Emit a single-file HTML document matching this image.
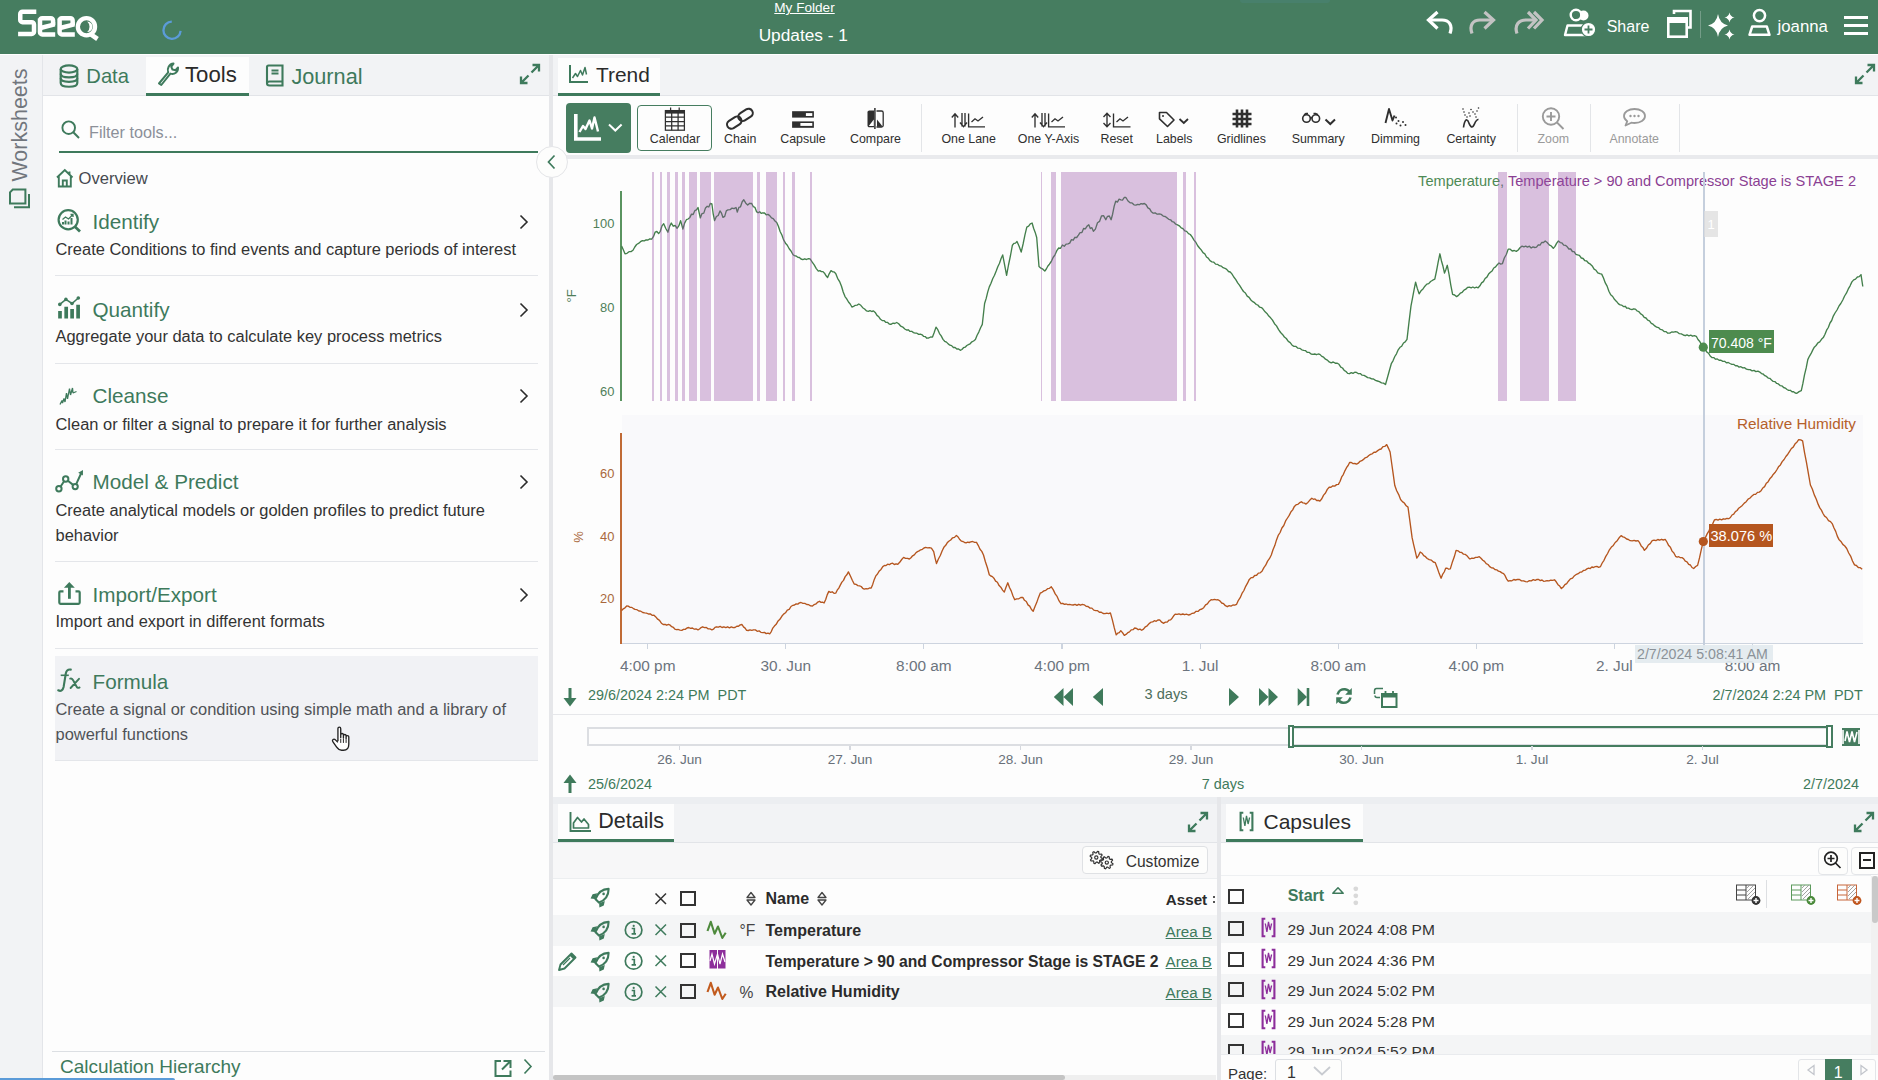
<!DOCTYPE html>
<html><head><meta charset="utf-8"><title>Seeq</title><style>
*{box-sizing:border-box;margin:0;padding:0}
html,body{width:1878px;height:1080px;overflow:hidden;background:#fdfdfc;font-family:"Liberation Sans",sans-serif}
.t{position:absolute;white-space:pre}
.r{position:absolute;display:block}
svg.r{overflow:visible}
</style></head><body>
<div class="r" style="left:0.0px;top:0.0px;width:1878.0px;height:54.0px;background:#467d60;"></div>
<svg class="r" style="left:0.0px;top:0.0px;" width="110" height="54" viewBox="0 0 110 54"><g fill="none" stroke="#fff" stroke-width="4.5"><path d="M36.3,11.65 H22.5 A2.25,2.25 0 0 0 20.25,13.9 V19.9 A2.25,2.25 0 0 0 22.5,22.15 H31.75 A2.25,2.25 0 0 1 34,24.4 V31.65 A2.25,2.25 0 0 1 31.75,33.9 H18.1"/><path d="M40,20.4 A2.2,2.2 0 0 1 42.2,18.2 H50.85 A2.2,2.2 0 0 1 53.05,20.4 V25 M40,18.5 V32.2 A2.2,2.2 0 0 0 42.2,34.4 H55.2"/><path d="M59.6,20.4 A2.2,2.2 0 0 1 61.8,18.2 H70.45 A2.2,2.2 0 0 1 72.65,20.4 V25 M59.6,18.5 V32.2 A2.2,2.2 0 0 0 61.8,34.4 H74.8"/><circle cx="86.45" cy="26.7" r="8.6" stroke-width="4.3"/><path d="M90.5,34.2 L97.5,39" stroke-width="4.6"/></g><path fill="#fff" d="M87.2,21.4 A5.3,5.3 0 0 1 87.2,32 A7.2,7.2 0 0 0 87.2,21.4 Z"/><path fill="#fff" d="M41,25.4 L55.2,22 L55.2,26.6 L41,30.2 Z M60.6,25.4 L74.8,22 L74.8,26.6 L60.6,30.2 Z"/></svg>
<svg class="r" style="left:160.0px;top:18.0px;" width="24" height="24" viewBox="0 0 24 24"><path d="M11.8,3.6 A8.6,8.6 0 1 0 20.6,12.8" fill="none" stroke="#5b9bd8" stroke-width="2.3"/></svg>
<div class="t" style="top:1.1px;font-size:13.60px;line-height:13.60px;color:#fff;left:804.5px;transform:translateX(-50%);text-decoration:underline;">My Folder</div>
<div class="t" style="top:27.2px;font-size:17.30px;line-height:17.30px;color:#fff;left:803.3px;transform:translateX(-50%);">Updates - 1</div>
<svg class="r" style="left:1420.0px;top:6.0px;" width="40" height="34" viewBox="0 0 40 34"><path d="M17.5,6 L8.5,14 L17.5,22.5" fill="none" stroke="#fff" stroke-width="3.2" stroke-linejoin="miter"/><path d="M9.5,14 H22 C29,14 33,19 30,27.5" fill="none" stroke="#fff" stroke-width="3.2"/></svg>
<svg class="r" style="left:1462.0px;top:6.0px;" width="40" height="34" viewBox="0 0 40 34"><g transform="translate(40,0) scale(-1,1)"><path d="M17.5,6 L8.5,14 L17.5,22.5" fill="none" stroke="#c3c3c3" stroke-width="3.2"/><path d="M9.5,14 H22 C29,14 33,19 30,27.5" fill="none" stroke="#c3c3c3" stroke-width="3.2"/></g></svg>
<svg class="r" style="left:1508.0px;top:6.0px;" width="40" height="34" viewBox="0 0 40 34"><g fill="none" stroke="#c3c3c3" stroke-width="3.2"><path d="M20,6 L28,14 L20,22.5"/><path d="M26,6 L34,14 L26,22.5"/><path d="M27,14 H18 C11,14 6,19 9,27.5"/></g></svg>
<svg class="r" style="left:1560.0px;top:6.0px;" width="40" height="34" viewBox="0 0 40 34"><circle cx="23.5" cy="9.5" r="5" fill="#fff"/><circle cx="16" cy="9" r="5.3" fill="#467d60" stroke="#fff" stroke-width="2.4"/><path d="M5,29 L7.5,19.5 H24 L26,29 Z" fill="none" stroke="#fff" stroke-width="2.4" stroke-linejoin="round"/><circle cx="28.5" cy="23.5" r="7.2" fill="#fff" stroke="#467d60" stroke-width="1.2"/><path d="M28.5,19.5 V27.5 M24.5,23.5 H32.5" stroke="#467d60" stroke-width="1.8"/></svg>
<div class="t" style="top:19.1px;font-size:16.00px;line-height:16.00px;color:#fff;left:1606.7px;">Share</div>
<svg class="r" style="left:1662.0px;top:6.0px;" width="40" height="34" viewBox="0 0 40 34"><path d="M12,8 V5 H28.5 V21.5 H25.5" fill="none" stroke="#fff" stroke-width="2.6"/><rect x="6.3" y="12.3" width="18.4" height="18.4" fill="none" stroke="#fff" stroke-width="2.6"/><rect x="5" y="11" width="21" height="6" fill="#fff"/></svg>
<div class="r" style="left:1700.0px;top:11.0px;width:1.0px;height:27.0px;background:rgba(255,255,255,0.25);"></div>
<svg class="r" style="left:1704.0px;top:8.0px;" width="36" height="36" viewBox="0 0 36 36"><path d="M14,6 Q15.5,15.5 24,17.5 Q15.5,19.5 14,29 Q12.5,19.5 4,17.5 Q12.5,15.5 14,6 Z" fill="#fff"/><path d="M25.5,4.5 Q26.3,8.7 30.5,9.5 Q26.3,10.3 25.5,14.5 Q24.7,10.3 20.5,9.5 Q24.7,8.7 25.5,4.5 Z" fill="#fff"/><path d="M25.5,21.5 Q26.3,25.7 30.5,26.5 Q26.3,27.3 25.5,31.5 Q24.7,27.3 20.5,26.5 Q24.7,25.7 25.5,21.5 Z" fill="#fff"/></svg>
<svg class="r" style="left:1744.0px;top:6.0px;" width="32" height="34" viewBox="0 0 32 34"><circle cx="15.5" cy="9.6" r="5.6" fill="none" stroke="#fff" stroke-width="2.5"/><path d="M5.5,28.8 L8.2,20.5 H22.8 L25.5,28.8 Z" fill="none" stroke="#fff" stroke-width="2.5" stroke-linejoin="round"/></svg>
<div class="t" style="top:18.6px;font-size:16.80px;line-height:16.80px;color:#fff;left:1777.5px;">joanna</div>
<div class="r" style="left:1844.2px;top:16.2px;width:23.8px;height:2.7px;background:#fff;"></div>
<div class="r" style="left:1844.2px;top:24.1px;width:23.8px;height:2.7px;background:#fff;"></div>
<div class="r" style="left:1844.2px;top:32.0px;width:23.8px;height:2.7px;background:#fff;"></div>
<div class="r" style="left:1240.0px;top:0.0px;width:90.0px;height:3.0px;background:rgba(80,140,150,0.22);border-radius:0 0 40px 40px;"></div>
<div class="r" style="left:0.0px;top:54.0px;width:43.0px;height:1026.0px;background:#f2f3f5;"></div>
<div class="r" style="left:42.0px;top:54.0px;width:1.0px;height:1026.0px;background:#e3e5e9;"></div>
<div class="r" style="left:0.0px;top:54.0px;width:1878.0px;height:1.0px;background:#ffffff;"></div>
<div class="t" style="left:21.3px;top:125px;font-size:21.5px;line-height:21.5px;color:#71767d;transform:translate(-50%,-50%) rotate(-90deg);">Worksheets</div>
<svg class="r" style="left:5.0px;top:185.0px;" width="30" height="28" viewBox="0 0 30 28"><g fill="none" stroke="#3e7a5c" stroke-width="2"><path d="M7.8,4.6 H20.4 V18.6 H5 V7.4 Z"/><path d="M24,9 V22.3 H9"/></g></svg>
<div class="r" style="left:43.0px;top:55.0px;width:506.0px;height:1025.0px;background:#fdfdfd;"></div>
<div class="r" style="left:43.0px;top:55.0px;width:506.0px;height:41.0px;background:#f2f3f5;"></div>
<div class="r" style="left:43.0px;top:95.0px;width:506.0px;height:1.0px;background:#e2e4e8;"></div>
<div class="r" style="left:146.0px;top:57.0px;width:103.0px;height:38.0px;background:#fdfdfd;"></div>
<div class="r" style="left:146.0px;top:92.5px;width:103.0px;height:3.0px;background:#3e7a5c;"></div>
<svg class="r" style="left:56.0px;top:62.0px;" width="26" height="28" viewBox="0 0 26 28"><g fill="none" stroke="#3e7a5c" stroke-width="2.2"><ellipse cx="13" cy="7" rx="8.3" ry="3.6"/><path d="M4.7,7 V21 C4.7,26 21.3,26 21.3,21 V7"/><path d="M4.7,11.7 C4.7,16.5 21.3,16.5 21.3,11.7 M4.7,16.3 C4.7,21 21.3,21 21.3,16.3"/></g></svg>
<div class="t" style="top:66.4px;font-size:20.20px;line-height:20.20px;color:#3e7a5c;left:86.3px;">Data</div>
<svg class="r" style="left:154.0px;top:60.0px;" width="28" height="28" viewBox="0 0 28 28"><path d="M5,23.5 L14.2,12.3 C12.8,8.5 15,4 19.5,3.6 L17.3,6.8 L18.5,9.6 L21.5,10.2 L24,7.5 C24.3,12 20.6,14.8 16.4,13.6 L7.3,25 Z" fill="none" stroke="#3e7a5c" stroke-width="2" stroke-linejoin="round"/></svg>
<div class="t" style="top:64.2px;font-size:22.20px;line-height:22.20px;color:#2b2b2b;left:185.0px;">Tools</div>
<svg class="r" style="left:262.0px;top:62.0px;" width="26" height="28" viewBox="0 0 26 28"><g fill="none" stroke="#3e7a5c" stroke-width="2.1"><path d="M5,21.5 V5 C5,4 5.5,3.5 6.5,3.5 H20.5 V19.5 H7.5 C5.5,19.5 5,20.5 5,21.5 C5,23 5.8,23.5 7.5,23.5 H20.5 V19.5"/><path d="M9.5,8.5 H16.5 M9.5,11.5 H16.5"/></g></svg>
<div class="t" style="top:65.6px;font-size:21.70px;line-height:21.70px;color:#3e7a5c;left:291.4px;">Journal</div>
<svg class="r" style="left:518.0px;top:62.0px;" width="24" height="24" viewBox="0 0 24 24"><g fill="none" stroke="#3e7a5c" stroke-width="2.3"><path d="M13.5,10.5 L21,3 M14.5,3 H21 V9.5"/><path d="M10.5,13.5 L3,21 M3,14.5 V21 H9.5"/></g></svg>
<svg class="r" style="left:60.0px;top:119.0px;" width="22" height="22" viewBox="0 0 22 22"><circle cx="8.7" cy="8.7" r="6.3" fill="none" stroke="#3e7a5c" stroke-width="1.9"/><path d="M13.3,13.3 L19,19" stroke="#3e7a5c" stroke-width="2"/></svg>
<div class="t" style="top:124.1px;font-size:16.20px;line-height:16.20px;color:#8c9099;left:89.0px;">Filter tools...</div>
<div class="r" style="left:59.0px;top:151.3px;width:479.0px;height:2.0px;background:#3e7a5c;"></div>
<svg class="r" style="left:54.0px;top:167.0px;" width="22" height="22" viewBox="0 0 22 22"><path d="M3,10.5 L10.8,3 L18.5,10.5 M4.8,9 V19.5 H16.8 V9 M8.8,19.5 V13.5 H12.8 V19.5 M15.5,4.5 V7.5" fill="none" stroke="#3e7a5c" stroke-width="1.9"/></svg>
<div class="t" style="top:171.4px;font-size:16.60px;line-height:16.60px;color:#464a50;left:78.5px;">Overview</div>
<div class="r" style="left:55.0px;top:656.0px;width:483.0px;height:104.0px;background:#f1f2f5;"></div>
<div class="r" style="left:55.0px;top:275.1px;width:483.0px;height:1.2px;background:#e4e6ea;"></div>
<div class="r" style="left:55.0px;top:363.0px;width:483.0px;height:1.2px;background:#e4e6ea;"></div>
<div class="r" style="left:55.0px;top:448.9px;width:483.0px;height:1.2px;background:#e4e6ea;"></div>
<div class="r" style="left:55.0px;top:561.0px;width:483.0px;height:1.2px;background:#e4e6ea;"></div>
<div class="r" style="left:55.0px;top:647.8px;width:483.0px;height:1.2px;background:#e4e6ea;"></div>
<div class="r" style="left:55.0px;top:759.7px;width:483.0px;height:1.2px;background:#e4e6ea;"></div>
<div class="t" style="top:211.9px;font-size:20.70px;line-height:20.70px;color:#3e7a5c;left:92.5px;">Identify</div>
<div class="t" style="top:241.3px;font-size:16.45px;line-height:16.45px;color:#333;left:55.5px;">Create Conditions to find events and capture periods of interest</div>
<svg class="r" style="left:518.0px;top:213.7px;" width="12" height="16" viewBox="0 0 12 16"><path d="M2.5,1.5 L9,8 L2.5,14.5" fill="none" stroke="#2b2b2b" stroke-width="1.6"/></svg>
<div class="t" style="top:300.1px;font-size:20.70px;line-height:20.70px;color:#3e7a5c;left:92.5px;">Quantify</div>
<div class="t" style="top:328.1px;font-size:16.45px;line-height:16.45px;color:#333;left:55.5px;">Aggregate your data to calculate key process metrics</div>
<svg class="r" style="left:518.0px;top:301.9px;" width="12" height="16" viewBox="0 0 12 16"><path d="M2.5,1.5 L9,8 L2.5,14.5" fill="none" stroke="#2b2b2b" stroke-width="1.6"/></svg>
<div class="t" style="top:386.1px;font-size:20.70px;line-height:20.70px;color:#3e7a5c;left:92.5px;">Cleanse</div>
<div class="t" style="top:415.5px;font-size:16.45px;line-height:16.45px;color:#333;left:55.5px;">Clean or filter a signal to prepare it for further analysis</div>
<svg class="r" style="left:518.0px;top:387.9px;" width="12" height="16" viewBox="0 0 12 16"><path d="M2.5,1.5 L9,8 L2.5,14.5" fill="none" stroke="#2b2b2b" stroke-width="1.6"/></svg>
<div class="t" style="top:472.4px;font-size:20.70px;line-height:20.70px;color:#3e7a5c;left:92.5px;">Model &amp; Predict</div>
<div class="t" style="top:501.8px;font-size:16.45px;line-height:16.45px;color:#333;left:55.5px;">Create analytical models or golden profiles to predict future</div>
<div class="t" style="top:526.6px;font-size:16.45px;line-height:16.45px;color:#333;left:55.5px;">behavior</div>
<svg class="r" style="left:518.0px;top:474.2px;" width="12" height="16" viewBox="0 0 12 16"><path d="M2.5,1.5 L9,8 L2.5,14.5" fill="none" stroke="#2b2b2b" stroke-width="1.6"/></svg>
<div class="t" style="top:585.4px;font-size:20.70px;line-height:20.70px;color:#3e7a5c;left:92.5px;">Import/Export</div>
<div class="t" style="top:613.4px;font-size:16.45px;line-height:16.45px;color:#333;left:55.5px;">Import and export in different formats</div>
<svg class="r" style="left:518.0px;top:587.2px;" width="12" height="16" viewBox="0 0 12 16"><path d="M2.5,1.5 L9,8 L2.5,14.5" fill="none" stroke="#2b2b2b" stroke-width="1.6"/></svg>
<div class="t" style="top:671.9px;font-size:20.70px;line-height:20.70px;color:#3e7a5c;left:92.5px;">Formula</div>
<div class="t" style="top:701.3px;font-size:16.45px;line-height:16.45px;color:#505257;left:55.5px;">Create a signal or condition using simple math and a library of</div>
<div class="t" style="top:726.1px;font-size:16.45px;line-height:16.45px;color:#505257;left:55.5px;">powerful functions</div>
<svg class="r" style="left:55.0px;top:207.0px;" width="28" height="28" viewBox="0 0 28 28"><g fill="none" stroke="#3e7a5c" stroke-width="2.2"><circle cx="13.2" cy="12.8" r="9.6"/><path d="M20,19.8 L25,24.5" stroke-width="2.8"/></g><path d="M8,17.5 V15 M10.5,17.5 V13.5 M13.5,17.5 V14.5 M16.5,17.5 V11" stroke="#3e7a5c" stroke-width="2"/><path d="M7.5,12.5 L10.5,10 L13.5,12 L18,7.5 M15.5,7.5 H18 V10" fill="none" stroke="#3e7a5c" stroke-width="1.3"/></svg>
<svg class="r" style="left:55.0px;top:294.0px;" width="28" height="28" viewBox="0 0 28 28"><path d="M5,24.5 V17 M11.2,24.5 V12.8 M17.1,24.5 V15 M23.1,24.5 V10.8" stroke="#3e7a5c" stroke-width="3.7"/><path d="M4.8,10.4 L10.9,5.4 L17,9.5 L23.3,4" fill="none" stroke="#3e7a5c" stroke-width="1.6"/><g fill="#3e7a5c"><circle cx="4.8" cy="10.4" r="1.8"/><circle cx="10.9" cy="5.4" r="1.8"/><circle cx="17" cy="9.5" r="1.8"/><circle cx="23.3" cy="4" r="1.8"/></g></svg>
<svg class="r" style="left:55.0px;top:380.0px;" width="28" height="28" viewBox="0 0 28 28"><path d="M5,24.5 L7,20.5 L7.5,23 L9,18.5 L10,22 L11.5,13 L12.5,19 L14.5,8.5 L15.5,15 L17.5,8 L18,13 L21.5,11.5" fill="none" stroke="#3e7a5c" stroke-width="1.3" stroke-linejoin="bevel"/></svg>
<svg class="r" style="left:54.0px;top:466.0px;" width="32" height="28" viewBox="0 0 32 28"><g fill="none" stroke="#3e7a5c" stroke-width="2"><circle cx="4.9" cy="22.7" r="2.7"/><circle cx="11.7" cy="13" r="2.7"/><circle cx="21.2" cy="20.6" r="2.6"/><path d="M6.6,20.5 L10.1,15.2 M13.9,14.8 L19.1,18.9 M22.2,18.2 L27.3,7"/></g><path d="M24.2,6.8 L29,4 L28.9,9.4 Z" fill="#3e7a5c"/></svg>
<svg class="r" style="left:55.0px;top:579.0px;" width="28" height="28" viewBox="0 0 28 28"><path d="M8.5,12.3 H5.4 C4.5,12.3 4.3,12.8 4.3,13.6 V23.6 C4.3,24.5 4.7,24.8 5.5,24.8 H23.5 C24.4,24.8 24.7,24.4 24.7,23.5 V13.6 C24.7,12.8 24.4,12.3 23.5,12.3 H20.5" fill="none" stroke="#3e7a5c" stroke-width="2.2"/><path d="M14.4,19.8 V8" stroke="#3e7a5c" stroke-width="2.8"/><path d="M8.9,8.8 L14.3,3 L19.8,8.8 Z" fill="#3e7a5c"/></svg>
<svg class="r" style="left:55.0px;top:665.0px;" width="28" height="30" viewBox="0 0 28 30"><path d="M3.2,25.3 C5.5,26.5 7.8,25.8 8.6,22 L10.8,8.5 C11.4,5.3 13,4.2 15.8,4.6" fill="none" stroke="#3e7a5c" stroke-width="2.1" stroke-linecap="round"/><path d="M5.7,10.3 H13.8" stroke="#3e7a5c" stroke-width="1.6"/><path d="M15.2,13.6 C16.5,13 17.5,13.8 18.3,15.5 L21.5,21.5 C22.3,23 23.2,23.3 24.6,22.4 M24,13.8 L15.6,23" fill="none" stroke="#3e7a5c" stroke-width="1.9" stroke-linecap="round"/></svg>
<svg class="r" style="left:330.0px;top:724.0px;" width="25" height="30" viewBox="0 0 25 30"><g transform="scale(1.22)"><path d="M6.5,14 V3.8 C6.5,2.2 8.8,2.2 8.8,3.8 V11 V8.8 C8.8,7.4 11,7.4 11,8.8 V11.5 V9.6 C11,8.3 13.2,8.3 13.2,9.6 V12 V10.5 C13.2,9.2 15.4,9.2 15.4,10.5 V16.5 C15.4,19.5 13.8,21.5 11,21.5 H9.5 C7.5,21.5 6.5,20.5 5.3,18.8 L2.3,14.5 C1.4,13.2 3,11.8 4.2,12.8 L6.5,15" fill="#fff" stroke="#222" stroke-width="1.1" stroke-linejoin="round"/><path d="M8.8,12 V15.5 M11,12 V15.5 M13.2,12.5 V15.5" stroke="#222" stroke-width="0.8"/></g></svg>
<div class="r" style="left:52.0px;top:1051.0px;width:493.0px;height:1.2px;background:#dcdfe3;"></div>
<div class="t" style="top:1056.9px;font-size:19.00px;line-height:19.00px;color:#3e7a5c;left:60.0px;">Calculation Hierarchy</div>
<svg class="r" style="left:491.0px;top:1057.0px;" width="24" height="22" viewBox="0 0 24 22"><path d="M10,4 H4.5 V19 H19.5 V13.5 M12.5,4 H19.5 V11 M19.5,4 L11,12.5" fill="none" stroke="#3e7a5c" stroke-width="2"/></svg>
<svg class="r" style="left:522.0px;top:1058.0px;" width="12" height="17" viewBox="0 0 12 17"><path d="M2.5,1.5 L9,8.5 L2.5,15.5" fill="none" stroke="#3e7a5c" stroke-width="1.6"/></svg>
<div class="r" style="left:0.0px;top:1077.5px;width:175.0px;height:2.5px;background:#5b9bd8;border-radius:0 2px 0 0;"></div>
<div class="r" style="left:549.0px;top:55.0px;width:4.0px;height:1025.0px;background:#e6e7ea;"></div>
<div class="r" style="left:553.0px;top:55.0px;width:1325.0px;height:1025.0px;background:#fdfdfd;"></div>
<div class="r" style="left:553.0px;top:55.0px;width:1325.0px;height:41.0px;background:#f2f3f5;"></div>
<div class="r" style="left:553.0px;top:95.0px;width:1325.0px;height:1.0px;background:#e2e4e8;"></div>
<div class="r" style="left:558.0px;top:58.0px;width:102.0px;height:37.0px;background:#fdfdfd;"></div>
<div class="r" style="left:558.0px;top:92.8px;width:102.0px;height:2.8px;background:#3e7a5c;"></div>
<svg class="r" style="left:567.0px;top:62.0px;" width="24" height="24" viewBox="0 0 24 24"><path d="M3,3 V20 H21" fill="none" stroke="#3e7a5c" stroke-width="2"/><path d="M5.5,16 L8.5,11.5 L10.5,14.5 L13.5,8.5 L15.5,13 L18,5.5 L19.5,12.5" fill="none" stroke="#3e7a5c" stroke-width="1.5" stroke-linejoin="round"/></svg>
<div class="t" style="top:65.3px;font-size:20.90px;line-height:20.90px;color:#2b2b2b;left:596.0px;">Trend</div>
<svg class="r" style="left:1853.0px;top:62.0px;" width="24" height="24" viewBox="0 0 24 24"><g fill="none" stroke="#3e7a5c" stroke-width="2.3"><path d="M13.5,10.5 L21,3 M14.5,3 H21 V9.5"/><path d="M10.5,13.5 L3,21 M3,14.5 V21 H9.5"/></g></svg>
<div class="r" style="left:553.0px;top:155.0px;width:1325.0px;height:3.5px;background:#e9eaed;"></div>
<div class="r" style="left:566.2px;top:102.8px;width:64.6px;height:50.0px;background:#467d60;border-radius:4px;"></div>
<svg class="r" style="left:566.0px;top:103.0px;" width="65" height="50" viewBox="0 0 65 50"><path d="M9.8,11 V36 H35" fill="none" stroke="#fff" stroke-width="3.6"/><path d="M13.5,29 L17,23 L19.5,26 L23.5,17.5 L26,25.5 L28.5,14.5 L32,28.5" fill="none" stroke="#fff" stroke-width="2.4" stroke-linejoin="round"/><path d="M43,21.5 L49.3,27.5 L55.6,21.5" fill="none" stroke="#fff" stroke-width="2"/></svg>
<div class="r" style="left:637.2px;top:104.6px;width:74.6px;height:46.6px;background:transparent;border:1.3px solid #467d60;border-radius:4px;"></div>
<svg class="r" style="left:662.0px;top:106.0px;" width="26" height="28" viewBox="0 0 26 28"><g fill="none" stroke="#2f2f2f" stroke-width="1.25"><rect x="3.4" y="4.6" width="19" height="19.6"/><path d="M3.4,11 H22.4 M3.4,15.5 H22.4 M3.4,19.8 H22.4 M9.7,7 V24.2 M16.1,7 V24.2 M8.6,1.6 V5 M17.2,1.6 V5"/></g><rect x="3.4" y="4.6" width="19" height="3" fill="#2f2f2f"/></svg>
<div class="t" style="top:133.0px;font-size:12.40px;line-height:12.40px;color:#2f2f2f;left:675.0px;transform:translateX(-50%);">Calendar</div>
<svg class="r" style="left:725.0px;top:106.0px;" width="30" height="26" viewBox="0 0 30 26"><g fill="none" stroke="#2f2f2f" stroke-width="2.1"><rect x="1.5" y="12.3" width="15.5" height="8.6" rx="4.3" transform="rotate(-32 9.25 16.6)"/><rect x="12.8" y="4.6" width="15.5" height="8.6" rx="4.3" transform="rotate(-32 20.55 8.9)"/></g></svg>
<div class="t" style="top:133.0px;font-size:12.40px;line-height:12.40px;color:#2f2f2f;left:740.2px;transform:translateX(-50%);">Chain</div>
<svg class="r" style="left:790.0px;top:109.0px;" width="26" height="22" viewBox="0 0 26 22"><rect x="2.1" y="2.2" width="21.8" height="6.4" fill="#2f2f2f"/><rect x="15.9" y="4.1" width="6.4" height="2.9" fill="#fff"/><rect x="2.1" y="12.4" width="21.8" height="6.4" fill="#2f2f2f"/><rect x="10.4" y="14" width="11.9" height="2.9" fill="#fff"/></svg>
<div class="t" style="top:133.0px;font-size:12.40px;line-height:12.40px;color:#2f2f2f;left:803.0px;transform:translateX(-50%);">Capsule</div>
<svg class="r" style="left:865.0px;top:106.0px;" width="22" height="26" viewBox="0 0 22 26"><path d="M9,4.5 H4.3 C3.3,4.5 2.5,5.3 2.5,6.3 V19.5 C2.5,20.5 3.3,21.3 4.3,21.3 H9 Z" fill="#2f2f2f"/><path d="M8.8,13.5 V20 H3.8 Z" fill="#fff"/><path d="M9.9,2 V23" stroke="#2f2f2f" stroke-width="1.5"/><path d="M11.5,5 H16.5 C17.5,5 18.2,5.7 18.2,6.7 V19.5 C18.2,20.5 17.5,21 16.5,21 H11.5" fill="none" stroke="#2f2f2f" stroke-width="1.3"/><path d="M12,13.5 L17.8,20.8 H12 Z" fill="#2f2f2f"/></svg>
<div class="t" style="top:133.0px;font-size:12.40px;line-height:12.40px;color:#2f2f2f;left:875.5px;transform:translateX(-50%);">Compare</div>
<div class="r" style="left:921.0px;top:104.0px;width:1.0px;height:48.0px;background:#e3e5e8;"></div>
<svg class="r" style="left:950.0px;top:110.0px;" width="38" height="20" viewBox="0 0 38 20"><g fill="none" stroke="#2f2f2f" stroke-width="1.35"><path d="M5,17.5 V4 M1.8,7.5 L5,3.8 L8.2,7.5"/><path d="M12,3 V16.5 M15,3 V16.5 M10,12.5 L13.5,16.8 L17,12.5"/><path d="M18.6,3.5 V16.8 H35"/><path d="M21.5,12 L25,8.8 L28,11 L33,7"/></g></svg>
<div class="t" style="top:133.0px;font-size:12.40px;line-height:12.40px;color:#2f2f2f;left:968.7px;transform:translateX(-50%);">One Lane</div>
<svg class="r" style="left:1029.5px;top:110.0px;" width="38" height="20" viewBox="0 0 38 20"><g fill="none" stroke="#2f2f2f" stroke-width="1.35"><path d="M5,17.5 V4 M1.8,7.5 L5,3.8 L8.2,7.5"/><path d="M12,3 V16.5 M15,3 V16.5 M10,12.5 L13.5,16.8 L17,12.5"/><path d="M18.6,3.5 V16.8 H35"/><path d="M21.5,12 L25,8.8 L28,11 L33,7"/></g></svg>
<div class="t" style="top:133.0px;font-size:12.40px;line-height:12.40px;color:#2f2f2f;left:1048.5px;transform:translateX(-50%);">One Y-Axis</div>
<svg class="r" style="left:1101.0px;top:110.0px;" width="32" height="20" viewBox="0 0 32 20"><g fill="none" stroke="#2f2f2f" stroke-width="1.35"><path d="M6,3.5 V16.5 M2.5,7 L6,3.2 L9.5,7 M2.5,13 L6,16.8 L9.5,13"/><path d="M12.5,3.5 V16.8 H29.5"/><path d="M15.5,12 L19,8.8 L22,11 L27,7"/></g></svg>
<div class="t" style="top:133.0px;font-size:12.40px;line-height:12.40px;color:#2f2f2f;left:1116.7px;transform:translateX(-50%);">Reset</div>
<svg class="r" style="left:1157.0px;top:110.0px;" width="34" height="20" viewBox="0 0 34 20"><path d="M2.5,2.5 H9.5 L17,10 L10.5,16.5 L2.5,8.8 Z" fill="none" stroke="#2f2f2f" stroke-width="1.6" stroke-linejoin="round"/><circle cx="6" cy="6" r="1" fill="#2f2f2f"/><path d="M22.5,9 L26.8,13 L31,9" fill="none" stroke="#2f2f2f" stroke-width="1.8"/></svg>
<div class="t" style="top:133.0px;font-size:12.40px;line-height:12.40px;color:#2f2f2f;left:1174.3px;transform:translateX(-50%);">Labels</div>
<svg class="r" style="left:1230.0px;top:108.0px;" width="24" height="22" viewBox="0 0 24 22"><path d="M7,1.5 V19.5 M12,1.5 V19.5 M17,1.5 V19.5 M2.5,6 H21.5 M2.5,11 H21.5 M2.5,16 H21.5" stroke="#2f2f2f" stroke-width="2.6"/></svg>
<div class="t" style="top:133.0px;font-size:12.40px;line-height:12.40px;color:#2f2f2f;left:1241.4px;transform:translateX(-50%);">Gridlines</div>
<svg class="r" style="left:1299.0px;top:110.0px;" width="40" height="18" viewBox="0 0 40 18"><g fill="none" stroke="#2f2f2f" stroke-width="1.6"><circle cx="7.5" cy="8.5" r="3.8"/><circle cx="16.8" cy="8.5" r="3.8"/><path d="M11.3,8.3 C11.8,7.3 12.5,7.3 13,8.3 M5,4.8 L7,3.5 H9 M14.5,3.5 H16.5 L19,4.8"/></g><path d="M26.5,9.5 L31.3,14 L36,9.5" fill="none" stroke="#2f2f2f" stroke-width="2"/></svg>
<div class="t" style="top:133.0px;font-size:12.40px;line-height:12.40px;color:#2f2f2f;left:1318.2px;transform:translateX(-50%);">Summary</div>
<svg class="r" style="left:1383.0px;top:106.0px;" width="26" height="24" viewBox="0 0 26 24"><path d="M2.5,17 L6,3 L9.5,14.5 L11.5,9.5" fill="none" stroke="#2f2f2f" stroke-width="1.9" stroke-linejoin="round"/><g fill="#2f2f2f"><circle cx="13" cy="11.5" r="1"/><circle cx="15.5" cy="15" r="1"/><circle cx="17.5" cy="19.5" r="1"/><circle cx="20" cy="16" r="1"/><circle cx="22.5" cy="19" r="1"/><circle cx="13.5" cy="17.5" r="1"/></g></svg>
<div class="t" style="top:133.0px;font-size:12.40px;line-height:12.40px;color:#2f2f2f;left:1395.5px;transform:translateX(-50%);">Dimming</div>
<svg class="r" style="left:1460.0px;top:105.0px;" width="24" height="26" viewBox="0 0 24 26"><path d="M3.5,22.5 C4.5,15 6.5,13.5 8,16 C9.5,19 10,22 12,22 C14.5,22 15,14 18.5,14.5" fill="none" stroke="#2f2f2f" stroke-width="1.6"/><g fill="#2f2f2f"><circle cx="3" cy="4" r="0.8"/><circle cx="4" cy="7" r="0.8"/><circle cx="5" cy="10" r="0.8"/><circle cx="7" cy="12" r="0.8"/><circle cx="9" cy="8" r="0.8"/><circle cx="11" cy="4.5" r="0.8"/><circle cx="13" cy="7" r="0.8"/><circle cx="15" cy="9" r="0.8"/><circle cx="17" cy="6" r="0.8"/><circle cx="18.5" cy="3" r="0.8"/><circle cx="10" cy="11" r="0.8"/><circle cx="16" cy="12" r="0.8"/></g></svg>
<div class="t" style="top:133.0px;font-size:12.40px;line-height:12.40px;color:#2f2f2f;left:1471.2px;transform:translateX(-50%);">Certainty</div>
<div class="r" style="left:1517.0px;top:104.0px;width:1.0px;height:48.0px;background:#e3e5e8;"></div>
<svg class="r" style="left:1540.0px;top:106.0px;" width="28" height="26" viewBox="0 0 28 26"><circle cx="11" cy="10.5" r="8.2" fill="none" stroke="#9a9a9a" stroke-width="1.9"/><path d="M17,16.5 L23.5,23 M11,6 V15 M6.5,10.5 H15.5" stroke="#9a9a9a" stroke-width="1.9"/></svg>
<div class="t" style="top:133.0px;font-size:12.40px;line-height:12.40px;color:#9a9a9a;left:1553.3px;transform:translateX(-50%);">Zoom</div>
<div class="r" style="left:1589.5px;top:104.0px;width:1.0px;height:48.0px;background:#e3e5e8;"></div>
<svg class="r" style="left:1620.0px;top:106.0px;" width="30" height="22" viewBox="0 0 30 22"><path d="M14.5,3 C8.5,3 4,6 4,10 C4,12.3 5.3,14 7.3,15.2 L5.5,19.5 L11.3,16.7 C12.3,16.9 13.4,17 14.5,17 C20.5,17 25,14 25,10 C25,6 20.5,3 14.5,3 Z" fill="none" stroke="#9a9a9a" stroke-width="1.8" stroke-linejoin="round"/><g fill="#9a9a9a"><circle cx="10.5" cy="10" r="1.2"/><circle cx="14.5" cy="10" r="1.2"/><circle cx="18.5" cy="10" r="1.2"/></g></svg>
<div class="t" style="top:133.0px;font-size:12.40px;line-height:12.40px;color:#9a9a9a;left:1634.2px;transform:translateX(-50%);">Annotate</div>
<div class="r" style="left:1679.0px;top:104.0px;width:1.0px;height:48.0px;background:#e3e5e8;"></div>
<svg class="r" style="left:560.0px;top:685.0px;" width="20" height="24" viewBox="0 0 20 24"><path d="M10,3 V17" stroke="#3f7a5b" stroke-width="3"/><path d="M3.5,13 H16.5 L10,21.5 Z" fill="#3f7a5b"/></svg>
<div class="t" style="top:687.6px;font-size:14.40px;line-height:14.40px;color:#3f7a5b;left:588.0px;">29/6/2024 2:24 PM  PDT</div>
<svg class="r" style="left:1050.0px;top:685.0px;" width="60" height="24" viewBox="0 0 60 24"><path d="M13.5,3 V21 L3.8,12 Z M23,3 V21 L13.5,12 Z M53,3 V21 L42.8,12 Z" fill="#3f7a5b"/></svg>
<div class="t" style="top:687.4px;font-size:14.60px;line-height:14.60px;color:#4d6e5b;left:1166.0px;transform:translateX(-50%);">3 days</div>
<svg class="r" style="left:1225.0px;top:685.0px;" width="90" height="24" viewBox="0 0 90 24"><path d="M4,3 V21 L14,12 Z M34,3 V21 L43.5,12 Z M43.5,3 V21 L53,12 Z M72.7,3 V21 L82,12 Z" fill="#3f7a5b"/><path d="M83,3 V21" stroke="#3f7a5b" stroke-width="2.6"/></svg>
<svg class="r" style="left:1334.0px;top:686.0px;" width="20" height="20" viewBox="0 0 20 20"><path d="M3.5,8.5 C4.5,4.5 8,3 11,3.3 C13.5,3.6 15,4.8 16,6.5 M16.5,11.5 C15.5,15.5 12,17 9,16.7 C6.5,16.4 5,15.2 4,13.5" fill="none" stroke="#3f7a5b" stroke-width="2.6"/><path d="M17.8,2 V8.8 H11.2 Z M2.2,18 V11.2 H8.8 Z" fill="#3f7a5b"/></svg>
<svg class="r" style="left:1372.0px;top:686.0px;" width="28" height="24" viewBox="0 0 28 24"><rect x="10" y="8" width="14.5" height="13" fill="none" stroke="#3f7a5b" stroke-width="2"/><path d="M10,8 H24.5 V11.5 H10 Z" fill="#3f7a5b"/><path d="M13.5,5 V8.5 M21,5 V8.5" stroke="#3f7a5b" stroke-width="1.8"/><path d="M11,2.5 H4.5 C3,2.5 2.5,3.5 2.5,5 V8 M8,11.5 H5 C3.5,11.5 3,10.5 3,9.5" fill="none" stroke="#3f7a5b" stroke-width="1.5"/></svg>
<div class="t" style="top:687.6px;font-size:14.40px;line-height:14.40px;color:#3f7a5b;right:15.2px;">2/7/2024 2:24 PM  PDT</div>
<div class="r" style="left:553.0px;top:713.5px;width:1325.0px;height:1.2px;background:#e6e7ea;"></div>
<div class="r" style="left:587.0px;top:726.5px;width:1245.0px;height:19.5px;background:transparent;border:2.2px solid #dcdee2;"></div>
<div class="r" style="left:1288.5px;top:725.5px;width:543.0px;height:21.0px;background:transparent;border:2.6px solid #467d60;"></div>
<div class="r" style="left:1287.5px;top:724.5px;width:6.5px;height:23.0px;background:#fff;border:2px solid #467d60;"></div>
<div class="r" style="left:1826.0px;top:724.5px;width:6.5px;height:23.0px;background:#fff;border:2px solid #467d60;"></div>
<svg class="r" style="left:1840.0px;top:726.0px;" width="22" height="22" viewBox="0 0 22 22"><rect x="2" y="2" width="18" height="18" fill="#467d60"/><path d="M3,4 V18 M19,4 V18 M5,15 L7,5.5 L9.5,16 L12,5.5 L14.5,16 L17,6" fill="none" stroke="#fff" stroke-width="1.6"/></svg>
<div class="r" style="left:678.9px;top:746.0px;width:1.2px;height:4.0px;background:#d5d8de;"></div>
<div class="t" style="top:753.3px;font-size:13.60px;line-height:13.60px;color:#687079;left:679.5px;transform:translateX(-50%);">26. Jun</div>
<div class="r" style="left:849.4px;top:746.0px;width:1.2px;height:4.0px;background:#d5d8de;"></div>
<div class="t" style="top:753.3px;font-size:13.60px;line-height:13.60px;color:#687079;left:850.0px;transform:translateX(-50%);">27. Jun</div>
<div class="r" style="left:1019.9px;top:746.0px;width:1.2px;height:4.0px;background:#d5d8de;"></div>
<div class="t" style="top:753.3px;font-size:13.60px;line-height:13.60px;color:#687079;left:1020.5px;transform:translateX(-50%);">28. Jun</div>
<div class="r" style="left:1190.4px;top:746.0px;width:1.2px;height:4.0px;background:#d5d8de;"></div>
<div class="t" style="top:753.3px;font-size:13.60px;line-height:13.60px;color:#687079;left:1191.0px;transform:translateX(-50%);">29. Jun</div>
<div class="r" style="left:1360.9px;top:746.0px;width:1.2px;height:4.0px;background:#d5d8de;"></div>
<div class="t" style="top:753.3px;font-size:13.60px;line-height:13.60px;color:#687079;left:1361.5px;transform:translateX(-50%);">30. Jun</div>
<div class="r" style="left:1531.4px;top:746.0px;width:1.2px;height:4.0px;background:#d5d8de;"></div>
<div class="t" style="top:753.3px;font-size:13.60px;line-height:13.60px;color:#687079;left:1532.0px;transform:translateX(-50%);">1. Jul</div>
<div class="r" style="left:1701.9px;top:746.0px;width:1.2px;height:4.0px;background:#d5d8de;"></div>
<div class="t" style="top:753.3px;font-size:13.60px;line-height:13.60px;color:#687079;left:1702.5px;transform:translateX(-50%);">2. Jul</div>
<svg class="r" style="left:560.0px;top:771.0px;" width="20" height="24" viewBox="0 0 20 24"><path d="M10,22 V8" stroke="#3f7a5b" stroke-width="3"/><path d="M3.5,12 H16.5 L10,3.5 Z" fill="#3f7a5b"/></svg>
<div class="t" style="top:777.0px;font-size:14.40px;line-height:14.40px;color:#3f7a5b;left:588.0px;">25/6/2024</div>
<div class="t" style="top:777.0px;font-size:14.40px;line-height:14.40px;color:#3f7a5b;left:1223.0px;transform:translateX(-50%);">7 days</div>
<div class="t" style="top:777.0px;font-size:14.40px;line-height:14.40px;color:#3f7a5b;right:19.0px;">2/7/2024</div>
<div class="r" style="left:621.6px;top:415.0px;width:1241.1px;height:228.5px;background:#f9f9fb;"></div>
<div class="t" style="right:22.0px;top:173.6px;font-size:14.6px;line-height:14.6px;color:#8b3f93"><span style="color:#4e8a55">Temperature, </span>Temperature &gt; 90 and Compressor Stage is STAGE 2</div>
<div class="t" style="top:416.3px;font-size:15.30px;line-height:15.30px;color:#b5602a;right:22.0px;">Relative Humidity</div>
<div class="r" style="left:620.2px;top:191.0px;width:1.6px;height:209.5px;background:#5a9460;"></div>
<div class="r" style="left:620.2px;top:433.0px;width:1.6px;height:210.5px;background:#c06a35;"></div>
<div class="t" style="top:218.1px;font-size:12.90px;line-height:12.90px;color:#4f7f59;right:1263.7px;">100</div>
<div class="t" style="top:301.7px;font-size:12.90px;line-height:12.90px;color:#4f7f59;right:1263.7px;">80</div>
<div class="t" style="top:385.7px;font-size:12.90px;line-height:12.90px;color:#4f7f59;right:1263.7px;">60</div>
<div class="t" style="top:467.9px;font-size:12.90px;line-height:12.90px;color:#a9683c;right:1263.7px;">60</div>
<div class="t" style="top:530.6px;font-size:12.90px;line-height:12.90px;color:#a9683c;right:1263.7px;">40</div>
<div class="t" style="top:592.9px;font-size:12.90px;line-height:12.90px;color:#a9683c;right:1263.7px;">20</div>
<div class="t" style="left:571px;top:296px;font-size:13px;line-height:13px;color:#4f7f59;transform:translate(-50%,-50%) rotate(-90deg)">&#176;F</div>
<div class="t" style="left:578px;top:537px;font-size:13px;line-height:13px;color:#a9683c;transform:translate(-50%,-50%) rotate(-90deg)">%</div>
<div class="r" style="left:621.6px;top:642.5px;width:1241.1px;height:1.3px;background:#cdd4df;"></div>
<div class="r" style="left:647.1px;top:643.0px;width:1.2px;height:6.0px;background:#cdd4df;"></div>
<div class="t" style="top:658.0px;font-size:15.40px;line-height:15.40px;color:#6c747e;left:647.7px;transform:translateX(-50%);">4:00 pm</div>
<div class="r" style="left:785.2px;top:643.0px;width:1.2px;height:6.0px;background:#cdd4df;"></div>
<div class="t" style="top:658.0px;font-size:15.40px;line-height:15.40px;color:#6c747e;left:785.8px;transform:translateX(-50%);">30. Jun</div>
<div class="r" style="left:923.3px;top:643.0px;width:1.2px;height:6.0px;background:#cdd4df;"></div>
<div class="t" style="top:658.0px;font-size:15.40px;line-height:15.40px;color:#6c747e;left:923.9px;transform:translateX(-50%);">8:00 am</div>
<div class="r" style="left:1061.4px;top:643.0px;width:1.2px;height:6.0px;background:#cdd4df;"></div>
<div class="t" style="top:658.0px;font-size:15.40px;line-height:15.40px;color:#6c747e;left:1062.0px;transform:translateX(-50%);">4:00 pm</div>
<div class="r" style="left:1199.5px;top:643.0px;width:1.2px;height:6.0px;background:#cdd4df;"></div>
<div class="t" style="top:658.0px;font-size:15.40px;line-height:15.40px;color:#6c747e;left:1200.1px;transform:translateX(-50%);">1. Jul</div>
<div class="r" style="left:1337.6px;top:643.0px;width:1.2px;height:6.0px;background:#cdd4df;"></div>
<div class="t" style="top:658.0px;font-size:15.40px;line-height:15.40px;color:#6c747e;left:1338.2px;transform:translateX(-50%);">8:00 am</div>
<div class="r" style="left:1475.7px;top:643.0px;width:1.2px;height:6.0px;background:#cdd4df;"></div>
<div class="t" style="top:658.0px;font-size:15.40px;line-height:15.40px;color:#6c747e;left:1476.3px;transform:translateX(-50%);">4:00 pm</div>
<div class="r" style="left:1613.8px;top:643.0px;width:1.2px;height:6.0px;background:#cdd4df;"></div>
<div class="t" style="top:658.0px;font-size:15.40px;line-height:15.40px;color:#6c747e;left:1614.4px;transform:translateX(-50%);">2. Jul</div>
<div class="r" style="left:1751.9px;top:643.0px;width:1.2px;height:6.0px;background:#cdd4df;"></div>
<div class="t" style="top:658.0px;font-size:15.40px;line-height:15.40px;color:#6c747e;left:1752.5px;transform:translateX(-50%);">8:00 am</div>
<div class="r" style="left:1703.0px;top:172.0px;width:2.0px;height:484.0px;background:#c5cfdd;"></div>
<svg class="r" style="left:0.0px;top:0.0px;pointer-events:none;" width="1878" height="1080" viewBox="0 0 1878 1080"><polyline points="621.6,246.1 623.3,249.7 625.0,253.8 627.0,253.3 629.0,251.7 631.0,251.6 633.0,250.3 634.8,247.0 636.6,244.5 638.5,243.4 640.5,241.7 642.4,240.6 644.3,240.8 646.1,239.8 648.0,240.0 649.8,238.9 651.7,239.2 653.4,236.7 655.1,232.2 656.9,231.5 658.6,233.6 660.3,231.3 662.0,225.8 663.7,223.7 665.8,228.5 667.9,232.2 669.6,226.4 671.3,223.0 673.2,226.2 675.2,225.5 677.1,228.3 678.9,225.7 680.6,220.6 682.9,229.0 684.6,223.1 686.4,219.7 688.1,219.0 689.9,217.4 691.5,214.1 693.1,214.5 694.8,210.7 696.4,209.9 698.0,207.5 700.3,217.9 702.0,213.6 703.8,213.1 705.5,207.9 707.2,206.3 708.8,207.0 710.3,203.5 711.9,204.0 713.2,213.8 714.6,220.6 716.4,216.5 718.2,215.5 720.0,210.9 721.5,213.2 723.0,217.4 724.7,216.4 726.3,210.9 728.0,209.8 730.0,209.7 732.0,208.1 734.0,208.7 736.0,207.5 737.3,212.0 738.9,207.4 740.5,206.8 742.2,201.7 743.8,199.8 745.8,203.2 747.7,205.1 749.7,203.3 751.7,203.5 753.3,206.7 754.9,207.3 756.5,211.6 758.1,212.8 759.7,211.7 761.2,213.4 762.8,212.8 764.5,213.0 766.2,214.8 768.0,214.4 769.7,215.6 771.5,217.9 773.2,218.6 775.0,221.0 776.7,222.5 778.4,226.3 780.2,231.8 781.9,235.0 783.6,239.9 785.5,243.2 787.3,245.2 789.2,248.8 791.0,251.0 792.9,254.4 794.5,255.7 796.1,256.0 797.8,257.3 799.4,257.5 801.0,259.0 802.8,259.6 804.7,258.8 806.5,259.5 808.4,258.7 810.2,259.0 812.2,262.2 814.2,264.8 816.3,268.6 818.3,271.1 819.9,270.7 821.4,271.6 823.0,271.6 824.5,273.2 826.1,275.8 827.6,277.6 829.3,273.6 831.0,270.6 832.6,271.8 834.1,271.9 835.7,273.4 837.6,278.3 839.6,281.6 841.5,286.2 843.2,292.0 845.0,296.6 846.7,298.9 848.5,302.0 850.2,304.0 851.9,307.0 853.6,306.4 855.3,305.3 857.1,305.1 858.8,304.0 860.8,305.3 862.7,307.7 864.6,309.0 866.6,310.9 868.3,311.4 870.0,310.6 871.8,311.5 873.5,310.9 875.2,312.4 877.0,315.4 878.8,316.8 880.5,319.3 882.2,320.5 884.0,320.6 885.7,322.3 887.4,322.3 889.2,324.0 890.9,324.4 892.8,323.2 894.8,323.5 896.7,322.5 898.7,323.8 900.8,326.2 902.8,327.1 904.8,329.0 906.5,330.0 908.3,329.8 910.0,331.4 911.7,331.3 913.5,332.6 915.2,333.1 916.9,333.2 918.7,334.4 920.4,334.2 922.1,334.8 923.7,336.4 925.2,336.6 926.8,338.2 928.7,338.0 930.6,337.0 932.5,337.1 934.2,332.5 936.0,327.1 937.8,329.7 939.5,333.6 941.2,335.9 943.0,339.4 944.7,341.3 946.5,342.1 948.2,343.9 949.9,345.2 951.6,345.6 953.4,347.5 955.1,347.5 956.8,349.0 958.6,349.0 960.3,350.3 961.9,349.5 963.5,347.7 965.2,347.2 966.8,345.5 968.4,344.7 970.1,343.8 971.9,341.8 973.6,341.0 975.4,339.4 977.1,335.2 978.8,332.1 980.6,327.7 982.3,324.4 984.6,303.5 986.2,298.4 987.7,292.1 989.3,286.9 991.0,283.2 992.8,278.5 994.5,275.3 996.2,271.1 997.8,266.8 999.5,263.3 1001.1,258.5 1002.7,254.9 1004.7,265.3 1006.6,275.3 1008.5,265.0 1010.5,255.5 1012.4,245.2 1013.9,243.4 1015.5,243.1 1017.0,241.5 1019.1,246.3 1021.2,252.1 1023.1,244.0 1024.9,235.1 1026.8,227.1 1028.6,226.2 1030.3,223.8 1032.1,223.0 1033.6,228.2 1035.2,232.4 1036.7,237.5 1039.0,266.5 1040.9,268.2 1042.9,269.2 1044.8,271.1 1046.3,269.0 1047.9,266.0 1049.4,264.2 1051.3,261.5 1053.1,257.5 1055.0,254.8 1056.8,250.7 1058.7,248.0 1060.6,248.3 1062.4,245.0 1064.3,246.3 1066.1,244.1 1068.0,243.8 1069.7,243.1 1071.5,239.6 1073.2,240.2 1074.9,237.3 1076.7,237.5 1078.4,235.2 1080.1,232.6 1081.9,232.6 1083.6,228.5 1085.3,228.9 1087.1,226.1 1088.8,224.8 1090.3,228.5 1091.9,227.7 1093.4,231.3 1095.4,229.1 1097.5,222.7 1099.5,221.4 1101.5,216.0 1103.5,215.6 1105.8,219.7 1107.5,216.3 1109.3,216.0 1111.1,219.7 1112.6,214.2 1114.2,206.1 1115.7,201.2 1117.4,202.1 1119.1,199.1 1120.8,199.8 1122.5,200.1 1124.2,197.5 1125.9,197.5 1128.0,201.0 1130.1,202.8 1132.0,202.9 1134.0,204.8 1135.9,205.1 1137.6,204.4 1139.3,204.7 1141.0,203.6 1142.7,204.0 1144.4,203.5 1146.2,204.9 1147.9,207.8 1149.7,208.8 1151.4,211.8 1153.2,213.2 1155.2,212.9 1157.2,214.2 1159.3,213.9 1161.3,214.4 1163.2,216.1 1165.2,216.5 1167.1,217.9 1168.8,219.3 1170.6,219.8 1172.3,221.7 1174.0,222.2 1175.8,224.2 1177.5,224.8 1179.3,225.8 1181.2,227.9 1183.0,228.7 1184.8,230.9 1186.6,231.4 1188.5,233.6 1190.3,234.5 1192.1,236.9 1194.0,240.1 1195.8,242.2 1197.7,245.8 1199.5,248.0 1201.2,249.9 1203.0,252.7 1204.8,253.8 1206.5,257.0 1208.2,258.1 1210.0,260.7 1211.9,261.8 1213.8,262.2 1215.6,264.1 1217.5,264.3 1219.4,265.7 1221.2,266.1 1223.1,267.7 1225.0,268.3 1226.7,269.4 1228.5,271.5 1230.2,272.0 1231.9,273.9 1233.8,277.0 1235.8,279.6 1237.7,282.9 1239.6,285.4 1241.6,288.7 1243.5,291.5 1245.4,293.0 1247.2,296.1 1249.1,297.4 1250.9,300.0 1252.8,301.7 1254.5,302.7 1256.3,304.5 1258.0,305.2 1259.7,307.2 1261.5,307.6 1263.2,309.3 1265.1,311.8 1266.9,313.4 1268.8,316.1 1270.6,317.8 1272.5,320.2 1274.5,323.7 1276.5,325.9 1278.6,329.7 1280.6,332.5 1282.5,334.4 1284.4,337.0 1286.3,338.5 1288.3,341.4 1290.2,342.6 1292.1,345.2 1294.0,346.4 1296.0,346.4 1297.9,348.2 1299.8,348.3 1301.8,349.8 1303.7,350.3 1305.6,350.7 1307.4,352.4 1309.3,352.4 1311.1,354.0 1313.0,354.4 1314.7,354.0 1316.5,354.7 1318.2,354.0 1319.9,354.4 1321.8,356.4 1323.6,357.2 1325.5,359.2 1327.3,360.1 1329.2,361.9 1331.2,362.8 1333.2,362.0 1335.3,363.2 1337.3,363.2 1339.0,364.3 1340.8,367.1 1342.5,368.0 1344.2,370.4 1346.0,371.5 1347.7,373.4 1349.5,373.7 1351.3,372.6 1353.0,373.4 1354.8,372.2 1356.6,372.5 1358.4,373.7 1360.3,373.6 1362.1,375.2 1364.0,375.4 1365.8,376.4 1367.7,377.6 1369.7,377.8 1371.6,378.9 1373.5,379.0 1375.5,380.4 1377.4,381.0 1379.4,381.7 1381.5,382.9 1383.5,383.1 1385.5,384.5 1387.4,377.8 1389.4,370.5 1391.3,363.7 1393.0,360.8 1394.8,356.5 1396.5,353.8 1398.2,349.8 1400.0,347.3 1401.7,346.2 1403.5,343.0 1405.2,341.9 1407.0,339.4 1409.0,322.1 1411.0,305.8 1412.5,298.1 1414.1,289.6 1415.6,282.2 1417.3,288.4 1419.1,293.8 1421.0,290.8 1423.0,288.9 1424.9,286.2 1426.8,284.1 1428.7,283.6 1430.6,281.5 1432.7,280.2 1434.8,279.2 1436.5,271.0 1438.2,261.9 1439.9,253.8 1441.4,260.7 1443.0,266.3 1444.5,273.0 1445.9,269.4 1447.3,265.3 1449.1,274.7 1450.8,285.1 1452.6,294.3 1454.6,295.0 1456.6,296.6 1458.4,295.4 1460.3,293.2 1462.2,292.3 1464.0,290.1 1465.8,289.2 1467.7,287.3 1469.4,287.2 1471.2,287.8 1472.9,287.0 1474.6,288.0 1476.4,287.2 1478.1,287.8 1479.9,285.8 1481.6,282.9 1483.4,281.6 1485.1,278.5 1486.9,277.1 1488.6,274.1 1490.4,272.3 1492.1,270.9 1493.8,268.0 1495.6,266.9 1497.3,264.7 1499.0,263.0 1500.7,264.1 1502.4,263.7 1504.3,258.0 1506.3,254.5 1508.2,249.1 1510.2,249.2 1512.2,251.0 1514.3,250.5 1516.3,251.4 1518.2,250.0 1520.2,247.5 1522.1,246.1 1523.9,246.9 1525.7,246.1 1527.5,247.1 1529.4,246.2 1531.2,248.0 1533.0,246.9 1534.8,247.5 1536.5,247.1 1538.3,244.8 1540.0,245.1 1541.7,242.5 1543.5,242.5 1545.2,241.0 1547.2,242.5 1549.2,244.9 1551.3,246.0 1553.3,248.4 1555.0,246.4 1556.7,243.1 1558.4,241.0 1560.2,242.6 1561.9,242.9 1563.7,245.2 1565.4,245.3 1567.2,246.8 1568.9,249.0 1570.7,249.0 1572.4,251.5 1574.1,251.7 1575.9,254.3 1577.6,254.9 1579.4,255.4 1581.3,258.0 1583.1,258.5 1584.9,260.7 1586.7,261.0 1588.6,263.2 1590.4,264.2 1592.2,265.9 1594.1,269.1 1596.0,270.3 1597.8,272.8 1599.8,273.7 1601.7,274.1 1603.5,278.0 1605.3,282.9 1607.1,286.1 1608.9,291.2 1610.7,294.8 1612.7,296.5 1614.6,299.6 1616.5,301.4 1618.5,303.9 1620.2,304.9 1621.8,305.2 1623.5,306.6 1625.2,306.3 1626.9,308.2 1628.5,308.1 1630.2,309.1 1631.9,309.6 1633.7,308.8 1635.4,309.1 1637.2,311.0 1638.9,311.7 1640.7,313.9 1642.5,315.0 1644.2,317.3 1646.0,318.0 1647.7,320.1 1649.5,320.9 1651.3,323.3 1653.0,324.2 1654.8,325.9 1656.7,327.2 1658.5,327.6 1660.4,329.4 1662.2,329.8 1664.1,331.5 1665.9,331.6 1667.8,333.2 1669.8,333.1 1671.7,332.0 1673.6,332.2 1675.6,331.6 1677.5,332.2 1679.4,333.7 1681.4,333.9 1683.3,335.0 1685.2,335.7 1687.0,334.8 1688.9,335.8 1690.7,335.2 1692.6,336.2 1694.4,335.6 1696.3,336.3 1698.0,339.5 1699.8,341.5 1701.5,344.9 1703.3,347.2 1705.0,348.8 1706.7,351.9 1708.5,353.2 1710.2,356.0 1711.9,357.6 1713.7,357.6 1715.5,359.2 1717.3,359.0 1719.1,360.2 1721.0,360.2 1722.8,361.4 1724.6,361.3 1726.4,362.8 1728.2,362.5 1730.0,363.5 1731.8,364.3 1733.6,364.3 1735.5,365.7 1737.3,365.7 1739.1,367.1 1740.9,366.7 1742.7,367.9 1744.6,367.7 1746.4,369.1 1748.2,369.5 1750.1,369.6 1752.1,370.8 1754.0,370.4 1755.9,371.6 1757.9,371.2 1759.8,372.1 1761.5,373.6 1763.1,374.0 1764.8,375.7 1766.5,376.4 1768.2,378.1 1769.8,378.3 1771.5,379.9 1773.2,381.4 1774.9,381.6 1776.7,383.4 1778.4,383.9 1780.1,385.6 1781.8,385.8 1783.6,387.5 1785.3,388.1 1787.0,389.5 1788.7,390.4 1790.3,390.3 1792.0,391.7 1793.6,391.7 1795.2,393.0 1796.9,393.3 1799.1,391.6 1801.3,390.7 1802.9,383.4 1804.5,374.8 1806.2,367.9 1807.8,359.6 1809.4,356.3 1811.0,353.7 1812.7,350.1 1814.3,347.2 1816.1,345.5 1817.9,342.9 1819.7,341.9 1821.5,339.3 1823.3,337.6 1825.0,334.3 1826.6,330.2 1828.3,327.5 1830.0,323.0 1831.7,320.5 1833.3,316.1 1835.0,313.0 1837.0,310.0 1838.9,306.2 1840.8,303.5 1842.8,300.0 1844.6,296.0 1846.4,293.2 1848.3,288.9 1850.1,285.8 1851.9,281.9 1853.7,279.9 1855.5,279.1 1857.4,277.0 1859.2,276.6 1861.0,274.6 1862.8,286.5" fill="none" stroke="#437f4b" stroke-width="1.35" stroke-linejoin="round"/><polyline points="621.6,610.6 623.3,608.8 625.0,607.8 626.7,606.0 628.3,606.1 629.9,607.3 631.5,607.3 633.1,608.3 635.0,609.4 637.0,609.7 638.9,611.0 640.8,611.2 642.8,612.5 644.7,612.9 646.6,613.2 648.4,614.0 650.3,613.9 652.1,615.3 654.0,615.2 655.8,616.9 657.7,619.2 659.5,620.3 661.4,623.2 663.2,624.5 665.0,624.3 666.7,625.2 668.5,624.4 670.2,625.2 671.7,626.7 673.3,627.3 674.8,629.1 676.5,629.7 678.3,629.5 680.0,630.2 681.8,630.3 683.5,629.3 685.2,629.4 687.0,628.0 688.7,627.5 690.6,628.4 692.4,628.0 694.3,629.2 696.1,628.9 698.0,629.8 699.5,629.0 701.1,627.6 702.6,626.8 704.5,627.6 706.3,627.5 708.2,628.9 710.0,628.9 711.9,629.8 713.4,629.2 715.0,627.4 716.5,626.8 718.4,627.2 720.2,626.4 722.0,627.5 723.9,626.8 725.8,627.6 727.6,626.8 729.5,627.8 731.3,626.9 733.1,627.7 735.0,627.5 736.8,626.2 738.5,626.2 740.2,624.9 742.0,624.5 743.5,626.9 745.1,628.1 746.6,630.3 748.3,630.5 750.0,629.9 751.8,630.4 753.5,629.8 755.4,629.9 757.2,631.3 759.1,630.9 760.9,632.3 762.8,632.6 764.5,632.4 766.2,633.6 768.0,633.1 769.7,633.8 771.3,631.6 772.8,628.1 774.4,626.1 776.2,624.3 778.1,620.9 779.9,619.3 781.8,616.3 783.6,614.1 785.5,612.8 787.3,610.1 789.2,609.4 791.0,606.5 792.9,605.3 794.5,605.0 796.1,603.9 797.8,604.1 799.4,602.9 801.0,602.5 802.9,603.4 804.8,603.4 806.8,604.5 808.7,604.7 810.6,605.9 812.5,606.0 814.2,604.6 816.0,603.9 817.8,602.1 819.5,601.3 821.0,602.4 822.6,602.2 824.1,603.0 825.7,599.5 827.2,594.9 828.8,591.4 830.5,592.4 832.2,591.8 834.0,593.3 835.7,593.2 837.2,590.2 838.8,588.1 840.3,585.1 841.9,582.1 843.5,580.4 845.2,576.6 846.8,574.8 848.4,571.9 850.3,575.7 852.3,580.2 854.2,584.0 856.0,584.3 857.8,585.6 859.6,585.8 861.2,586.5 862.7,588.3 864.3,589.1 866.0,588.7 867.8,588.9 869.5,588.0 871.2,588.1 872.7,584.4 874.3,579.4 875.8,575.9 877.5,574.0 879.3,570.9 881.0,569.4 882.8,566.6 884.4,565.5 886.0,565.6 887.7,564.2 889.3,564.7 890.9,563.6 892.6,563.2 894.3,564.5 896.1,563.8 897.8,564.3 899.7,562.3 901.7,559.5 903.6,557.4 905.5,558.4 907.5,558.3 909.4,559.0 911.0,557.7 912.6,555.8 914.3,554.8 915.9,552.8 917.5,551.6 919.1,550.9 920.7,549.8 922.4,549.3 924.0,548.0 925.6,547.4 927.5,547.9 929.5,547.7 931.4,548.1 933.7,551.6 935.1,558.1 936.5,563.6 938.4,559.0 940.3,555.5 942.2,550.8 944.1,546.9 945.7,545.3 947.2,542.8 948.8,541.2 950.7,540.0 952.6,537.8 954.5,537.4 956.4,535.4 958.1,537.0 959.8,539.6 961.5,541.2 963.0,541.5 964.6,542.5 966.1,542.8 967.6,542.2 969.2,542.5 970.7,541.9 972.6,541.5 974.6,542.4 976.5,542.3 978.2,545.3 980.0,549.2 981.8,551.4 983.5,555.0 985.4,561.8 987.4,567.7 989.3,574.7 990.8,576.0 992.4,576.6 993.9,578.2 995.6,581.1 997.4,582.3 999.1,585.6 1000.8,587.2 1002.6,590.1 1004.3,592.1 1006.0,587.2 1007.8,582.8 1009.5,587.5 1011.2,590.9 1013.0,596.0 1014.7,599.7 1016.7,598.8 1018.8,598.8 1020.8,597.5 1022.8,597.4 1024.5,600.3 1026.3,601.5 1028.0,604.9 1029.7,606.1 1031.5,609.5 1033.2,611.3 1035.0,606.5 1036.7,602.6 1038.5,597.4 1040.2,593.2 1042.0,592.3 1043.9,590.9 1045.8,590.3 1047.6,588.7 1049.5,588.3 1051.3,586.8 1053.2,589.6 1055.2,593.9 1057.1,596.4 1059.1,600.9 1061.0,603.7 1062.7,603.3 1064.5,604.4 1066.2,604.0 1067.9,604.7 1069.7,604.4 1071.4,604.8 1073.2,605.0 1075.1,604.4 1076.9,605.4 1078.7,604.3 1080.5,605.2 1082.4,604.4 1084.2,604.8 1086.1,606.3 1088.0,606.5 1090.0,608.1 1091.9,608.1 1093.8,610.1 1095.7,610.6 1097.6,610.7 1099.4,612.2 1101.3,612.2 1103.1,613.5 1105.0,613.6 1106.8,613.1 1108.6,613.6 1110.4,612.9 1112.3,619.6 1114.3,627.9 1116.2,634.9 1117.7,633.2 1119.3,632.7 1120.8,630.7 1122.5,632.6 1124.3,635.4 1126.0,634.4 1127.8,632.7 1129.5,631.9 1131.2,629.9 1133.0,629.7 1134.7,628.0 1136.5,628.4 1138.2,629.7 1140.0,629.1 1141.7,630.3 1143.5,629.1 1145.4,626.8 1147.2,625.8 1149.1,623.6 1150.9,622.2 1152.7,621.9 1154.4,620.7 1156.2,621.3 1157.9,620.0 1159.7,619.9 1161.7,622.2 1163.7,623.3 1165.4,622.1 1167.2,622.1 1168.9,620.2 1170.6,619.9 1172.1,618.2 1173.7,615.8 1175.2,614.1 1177.1,614.4 1179.0,613.9 1180.9,614.7 1182.8,614.0 1184.6,614.7 1186.5,614.2 1188.4,615.0 1190.3,614.5 1192.2,613.3 1194.2,613.0 1196.1,611.3 1198.0,611.4 1200.0,609.6 1201.9,609.0 1203.7,607.7 1205.6,604.9 1207.4,603.8 1209.3,601.2 1211.1,599.7 1212.8,599.9 1214.5,599.4 1216.3,599.9 1218.0,599.7 1219.9,600.9 1221.7,603.0 1223.6,603.7 1225.4,605.7 1227.3,606.7 1229.2,605.7 1231.0,606.1 1232.9,605.0 1234.7,605.2 1236.6,604.3 1238.4,600.3 1240.2,597.7 1242.0,593.4 1243.9,590.5 1245.7,586.3 1247.5,583.2 1249.3,579.4 1251.1,577.7 1252.9,577.5 1254.7,575.5 1256.6,575.3 1258.4,573.1 1260.2,572.8 1262.0,571.3 1263.9,567.6 1265.7,565.2 1267.6,561.1 1269.4,558.7 1271.3,555.0 1273.0,549.7 1274.8,545.6 1276.5,539.9 1278.2,535.4 1280.1,532.5 1281.9,528.0 1283.8,525.5 1285.6,520.9 1287.5,518.0 1289.2,515.4 1291.0,511.8 1292.7,509.9 1294.4,506.4 1296.2,504.7 1297.9,504.3 1299.7,502.7 1301.4,501.8 1302.9,502.9 1304.5,503.2 1306.0,504.1 1307.9,502.4 1309.9,500.1 1311.8,498.3 1313.4,499.3 1315.0,498.9 1316.7,500.5 1318.3,500.3 1319.9,501.1 1321.8,498.8 1323.6,495.1 1325.5,493.0 1327.3,489.4 1329.2,487.2 1331.0,487.2 1332.9,485.8 1334.7,486.1 1336.6,484.6 1338.4,484.4 1340.1,481.3 1341.7,476.9 1343.3,474.6 1345.0,470.6 1346.5,467.7 1348.1,465.5 1349.6,462.5 1351.3,462.5 1353.1,463.6 1354.8,463.5 1356.6,464.1 1358.3,463.2 1360.0,461.3 1361.8,460.7 1363.5,459.4 1365.2,457.8 1367.0,457.2 1368.8,455.5 1370.5,454.4 1372.2,453.8 1374.0,452.2 1375.7,452.2 1377.4,450.9 1379.3,449.5 1381.1,449.0 1383.0,446.6 1384.8,446.4 1386.7,444.6 1388.4,448.1 1390.1,452.0 1391.7,463.5 1393.2,474.2 1394.8,485.6 1396.7,490.7 1398.7,494.6 1400.6,499.5 1402.4,501.6 1404.3,503.0 1406.2,505.8 1408.0,507.1 1410.0,521.9 1412.1,537.7 1413.7,544.8 1415.2,551.1 1416.8,558.1 1418.5,555.6 1420.2,552.0 1422.0,553.2 1423.7,555.7 1425.5,556.7 1427.2,558.5 1429.2,559.7 1431.2,560.1 1433.3,562.0 1435.3,562.7 1437.2,567.7 1439.2,573.6 1441.1,578.2 1442.6,574.4 1444.2,572.0 1445.7,568.2 1447.2,568.2 1448.8,569.2 1450.3,568.9 1452.2,562.6 1454.2,557.1 1456.1,550.4 1458.0,550.8 1459.8,552.3 1461.7,552.4 1463.5,554.2 1465.4,554.4 1466.9,555.7 1468.5,557.7 1470.0,559.0 1471.9,558.2 1473.7,558.3 1475.6,557.4 1477.4,557.4 1479.3,556.7 1481.0,558.2 1482.8,560.2 1484.5,561.4 1486.2,563.6 1488.0,564.5 1489.7,566.6 1491.4,567.8 1493.2,568.0 1494.9,569.5 1496.7,569.8 1498.4,571.1 1500.1,571.6 1501.9,572.9 1503.6,573.6 1505.1,575.7 1506.7,579.1 1508.2,581.2 1510.1,580.6 1511.9,580.8 1513.8,579.5 1515.6,580.0 1517.5,579.4 1519.5,579.5 1521.5,580.9 1523.6,580.8 1525.6,581.7 1527.5,581.8 1529.4,580.6 1531.3,580.9 1533.3,579.7 1535.2,580.4 1537.1,579.4 1538.7,579.5 1540.3,580.6 1542.0,580.0 1543.6,581.3 1545.2,581.2 1547.1,580.6 1548.9,580.9 1550.8,580.2 1552.6,580.3 1554.5,579.8 1556.2,581.8 1558.0,584.7 1559.7,586.1 1561.4,588.6 1563.2,587.0 1564.9,584.7 1566.7,583.6 1568.4,581.2 1570.4,578.9 1572.5,578.2 1574.5,575.7 1576.5,574.3 1578.2,573.7 1580.0,572.2 1581.7,572.0 1583.4,570.5 1585.2,570.2 1586.9,568.9 1588.6,568.2 1590.2,568.6 1591.9,567.0 1593.5,567.5 1595.2,566.7 1596.9,566.4 1598.7,567.3 1600.4,566.7 1602.2,563.0 1604.0,560.3 1605.8,556.4 1607.6,553.5 1609.4,549.8 1611.4,547.1 1613.3,545.4 1615.2,542.5 1617.2,540.7 1619.1,537.8 1621.1,535.6 1622.9,536.9 1624.7,537.4 1626.6,539.0 1628.4,539.5 1630.2,540.7 1632.2,540.9 1634.1,540.4 1636.0,541.0 1638.0,540.7 1639.6,542.7 1641.2,545.9 1642.8,547.4 1644.4,550.3 1646.4,548.3 1648.3,545.0 1650.2,543.6 1652.2,540.7 1654.1,540.2 1655.9,540.6 1657.8,539.5 1659.6,540.2 1661.5,539.3 1663.3,540.0 1665.2,539.4 1666.9,542.0 1668.7,545.6 1670.4,547.3 1672.1,551.1 1673.9,553.0 1675.6,556.3 1677.2,557.1 1678.8,556.7 1680.4,557.7 1682.0,557.6 1683.7,558.8 1685.3,561.2 1687.0,561.8 1688.7,564.4 1690.4,565.0 1692.0,567.5 1693.7,568.5 1695.7,566.5 1697.6,565.4 1699.5,557.9 1701.4,549.2 1703.3,541.5 1705.2,538.1 1707.0,534.1 1708.8,531.1 1710.7,527.0 1712.6,524.1 1714.4,520.0 1716.2,519.4 1718.0,520.1 1719.8,519.1 1721.6,519.8 1723.3,518.8 1725.1,519.2 1726.9,518.4 1728.7,518.7 1730.4,517.5 1732.0,515.0 1733.7,514.1 1735.4,511.6 1737.1,510.5 1738.7,508.2 1740.4,507.0 1742.3,505.4 1744.3,503.1 1746.2,501.7 1748.1,499.1 1750.1,498.0 1752.0,495.9 1753.8,494.4 1755.6,494.4 1757.5,492.4 1759.3,492.1 1761.1,490.7 1762.8,488.0 1764.6,486.6 1766.3,483.3 1768.0,481.9 1769.8,478.8 1771.5,477.1 1773.2,474.4 1775.0,472.6 1776.7,470.0 1778.5,466.8 1780.4,464.9 1782.2,461.6 1784.1,459.5 1785.9,456.5 1787.8,454.2 1789.6,451.3 1791.4,448.5 1793.2,447.1 1795.1,443.8 1796.9,442.2 1798.7,439.6 1800.7,439.9 1802.6,440.9 1804.5,452.3 1806.5,462.6 1808.5,474.2 1810.4,485.0 1812.4,489.3 1814.3,494.9 1816.2,499.0 1818.2,504.4 1819.8,507.9 1821.4,510.1 1823.0,513.5 1824.6,516.1 1826.5,517.5 1828.5,520.6 1830.5,521.6 1832.4,523.9 1834.0,528.0 1835.7,531.4 1837.3,536.1 1838.9,539.4 1840.9,541.4 1842.8,544.4 1844.8,546.0 1846.7,548.5 1848.7,553.0 1850.6,556.1 1852.5,561.0 1854.5,564.9 1856.4,565.5 1858.3,567.5 1860.3,567.7 1862.2,569.3" fill="none" stroke="#b5561f" stroke-width="1.35" stroke-linejoin="round"/></svg>
<div class="r" style="left:652.0px;top:172.0px;width:2.2px;height:228.7px;background:rgba(150,76,164,0.35);"></div>
<div class="r" style="left:659.8px;top:172.0px;width:2.7px;height:228.7px;background:rgba(150,76,164,0.35);"></div>
<div class="r" style="left:667.0px;top:172.0px;width:3.0px;height:228.7px;background:rgba(150,76,164,0.35);"></div>
<div class="r" style="left:674.8px;top:172.0px;width:3.0px;height:228.7px;background:rgba(150,76,164,0.35);"></div>
<div class="r" style="left:681.8px;top:172.0px;width:3.4px;height:228.7px;background:rgba(150,76,164,0.35);"></div>
<div class="r" style="left:689.0px;top:172.0px;width:7.8px;height:228.7px;background:rgba(150,76,164,0.35);"></div>
<div class="r" style="left:700.3px;top:172.0px;width:10.4px;height:228.7px;background:rgba(150,76,164,0.35);"></div>
<div class="r" style="left:714.2px;top:172.0px;width:38.6px;height:228.7px;background:rgba(150,76,164,0.35);"></div>
<div class="r" style="left:757.0px;top:172.0px;width:2.8px;height:228.7px;background:rgba(150,76,164,0.35);"></div>
<div class="r" style="left:766.0px;top:172.0px;width:10.7px;height:228.7px;background:rgba(150,76,164,0.35);"></div>
<div class="r" style="left:783.1px;top:172.0px;width:2.1px;height:228.7px;background:rgba(150,76,164,0.35);"></div>
<div class="r" style="left:792.2px;top:172.0px;width:2.5px;height:228.7px;background:rgba(150,76,164,0.35);"></div>
<div class="r" style="left:810.0px;top:172.0px;width:1.9px;height:228.7px;background:rgba(150,76,164,0.35);"></div>
<div class="r" style="left:1040.9px;top:172.0px;width:1.1px;height:228.7px;background:rgba(150,76,164,0.35);"></div>
<div class="r" style="left:1051.0px;top:172.0px;width:5.0px;height:228.7px;background:rgba(150,76,164,0.35);"></div>
<div class="r" style="left:1061.0px;top:172.0px;width:115.9px;height:228.7px;background:rgba(150,76,164,0.35);"></div>
<div class="r" style="left:1182.6px;top:172.0px;width:3.0px;height:228.7px;background:rgba(150,76,164,0.35);"></div>
<div class="r" style="left:1193.8px;top:172.0px;width:2.2px;height:228.7px;background:rgba(150,76,164,0.35);"></div>
<div class="r" style="left:1497.8px;top:172.0px;width:9.2px;height:228.7px;background:rgba(150,76,164,0.35);"></div>
<div class="r" style="left:1520.0px;top:172.0px;width:28.7px;height:228.7px;background:rgba(150,76,164,0.35);"></div>
<div class="r" style="left:1558.0px;top:172.0px;width:17.8px;height:228.7px;background:rgba(150,76,164,0.35);"></div>
<div class="r" style="left:1704.0px;top:210.5px;width:14.0px;height:26.0px;background:rgba(220,220,220,0.75);"></div>
<div class="t" style="top:217.5px;font-size:13.00px;line-height:13.00px;color:#fff;left:1711.0px;transform:translateX(-50%);">1</div>
<div class="r" style="left:1709.0px;top:330.0px;width:65.0px;height:23.0px;background:#4d8b4e;"></div>
<div class="t" style="top:335.6px;font-size:14.00px;line-height:14.00px;color:#fff;left:1711.0px;">70.408 °F</div>
<svg class="r" style="left:1698.0px;top:342.0px;" width="11" height="11" viewBox="0 0 11 11"><circle cx="5.3" cy="5.2" r="4.6" fill="#4d8b4e"/></svg>
<div class="r" style="left:1708.7px;top:524.0px;width:64.0px;height:22.8px;background:#b5561f;"></div>
<div class="t" style="top:528.9px;font-size:14.60px;line-height:14.60px;color:#fff;left:1710.5px;">38.076 %</div>
<svg class="r" style="left:1698.0px;top:536.0px;" width="11" height="11" viewBox="0 0 11 11"><circle cx="5.3" cy="5.5" r="4.6" fill="#b5561f"/></svg>
<div class="r" style="left:1634.6px;top:644.5px;width:138.2px;height:18.3px;background:rgba(226,234,238,0.9);"></div>
<div class="t" style="top:647.3px;font-size:14.20px;line-height:14.20px;color:#8b9298;left:1637.0px;">2/7/2024 5:08:41 AM</div>
<div class="r" style="left:553.0px;top:797.0px;width:1325.0px;height:7.0px;background:#eceef1;"></div>
<div class="r" style="left:553.0px;top:804.0px;width:664.0px;height:276.0px;background:#fdfdfd;"></div>
<div class="r" style="left:553.0px;top:804.0px;width:664.0px;height:38.5px;background:#f2f3f5;"></div>
<div class="r" style="left:553.0px;top:842.0px;width:664.0px;height:1.0px;background:#e2e4e8;"></div>
<div class="r" style="left:558.0px;top:804.0px;width:116.3px;height:38.0px;background:#fdfdfd;"></div>
<div class="r" style="left:558.0px;top:839.2px;width:116.3px;height:2.8px;background:#3e7a5c;"></div>
<svg class="r" style="left:567.0px;top:809.0px;" width="26" height="26" viewBox="0 0 26 26"><path d="M3.5,3 V22 H24" fill="none" stroke="#3e7a5c" stroke-width="1.9"/><path d="M6.5,19 V14 L10.5,8.5 L14.5,13 L17,10 L21.5,15.5 V19 Z" fill="none" stroke="#3e7a5c" stroke-width="1.7" stroke-linejoin="round"/></svg>
<div class="t" style="top:810.5px;font-size:21.50px;line-height:21.50px;color:#2b2b2b;left:598.3px;">Details</div>
<svg class="r" style="left:1186.0px;top:810.0px;" width="24" height="24" viewBox="0 0 24 24"><g fill="none" stroke="#3e7a5c" stroke-width="2.3"><path d="M13.5,10.5 L21,3 M14.5,3 H21 V9.5"/><path d="M10.5,13.5 L3,21 M3,14.5 V21 H9.5"/></g></svg>
<div class="r" style="left:553.0px;top:843.0px;width:664.0px;height:35.7px;background:#f7f7f8;"></div>
<div class="r" style="left:553.0px;top:878.3px;width:664.0px;height:1.0px;background:#eceef0;"></div>
<div class="r" style="left:1082.4px;top:846.3px;width:125.9px;height:28.0px;background:#fdfdfc;border:1px solid #dfe1e4;border-radius:4px;"></div>
<svg class="r" style="left:1087.0px;top:849.0px;" width="30" height="24" viewBox="0 0 30 24"><g fill="none" stroke="#333" stroke-width="1.2" stroke-linejoin="round"><path d="M13.90,8.50 L15.48,9.73 L15.12,10.91 L13.12,11.06 L12.55,11.75 L12.80,13.74 L11.71,14.32 L10.20,13.01 L9.30,13.10 L8.07,14.68 L6.89,14.32 L6.74,12.32 L6.05,11.75 L4.06,12.00 L3.48,10.91 L4.79,9.40 L4.70,8.50 L3.12,7.27 L3.48,6.09 L5.48,5.94 L6.05,5.25 L5.80,3.26 L6.89,2.68 L8.40,3.99 L9.30,3.90 L10.53,2.32 L11.71,2.68 L11.86,4.68 L12.55,5.25 L14.54,5.00 L15.12,6.09 L13.81,7.60 Z"/><circle cx="9.3" cy="8.5" r="1.6"/><path d="M24.40,13.60 L25.98,14.83 L25.62,16.01 L23.62,16.16 L23.05,16.85 L23.30,18.84 L22.21,19.42 L20.70,18.11 L19.80,18.20 L18.57,19.78 L17.39,19.42 L17.24,17.42 L16.55,16.85 L14.56,17.10 L13.98,16.01 L15.29,14.50 L15.20,13.60 L13.62,12.37 L13.98,11.19 L15.98,11.04 L16.55,10.35 L16.30,8.36 L17.39,7.78 L18.90,9.09 L19.80,9.00 L21.03,7.42 L22.21,7.78 L22.36,9.78 L23.05,10.35 L25.04,10.10 L25.62,11.19 L24.31,12.70 Z"/><circle cx="19.8" cy="13.6" r="1.6"/></g></svg>
<div class="t" style="top:853.6px;font-size:15.60px;line-height:15.60px;color:#333;left:1125.7px;">Customize</div>
<svg class="r" style="left:590.0px;top:888.0px;" width="20" height="20" viewBox="0 0 20 20"><path d="M18.6,0.9 C12.2,1.2 7.6,5.3 5.4,11 L8.9,14.6 C14.6,12.4 18.6,7.6 18.6,0.9 Z" fill="none" stroke="#3e7a5c" stroke-width="2.1" stroke-linejoin="round"/><circle cx="13.6" cy="5.9" r="1.3" fill="#3e7a5c"/><path d="M7.2,5.3 L2.6,6.2 L0.6,10.6 L5,10.9 Z M14.8,13 L13.8,17.5 L9.4,19.5 L9.1,15.2 Z" fill="#3e7a5c"/></svg>
<svg class="r" style="left:654.0px;top:892.0px;" width="14" height="14" viewBox="0 0 14 14"><path d="M1.5,1.5 L12,12 M12,1.5 L1.5,12" stroke="#333" stroke-width="1.5"/></svg>
<div class="r" style="left:680.3px;top:890.8px;width:15.5px;height:15.0px;background:transparent;border:2px solid #333;"></div>
<svg class="r" style="left:745.0px;top:891.0px;" width="12" height="16" viewBox="0 0 12 16"><path d="M2,6.5 L6,1.5 L10,6.5 Z M2,9 L6,14 L10,9 Z" fill="none" stroke="#444" stroke-width="1.3" stroke-linejoin="round"/></svg>
<div class="t" style="top:891.2px;font-size:16.00px;line-height:16.00px;color:#2b2b2b;font-weight:700;left:765.5px;">Name</div>
<svg class="r" style="left:816.3px;top:891.0px;" width="12" height="16" viewBox="0 0 12 16"><path d="M2,6.5 L6,1.5 L10,6.5 Z M2,9 L6,14 L10,9 Z" fill="none" stroke="#444" stroke-width="1.3" stroke-linejoin="round"/></svg>
<div class="t" style="top:891.7px;font-size:15.20px;line-height:15.20px;color:#2b2b2b;font-weight:700;left:1165.8px;">Asset</div>
<div class="r" style="left:1213.0px;top:896.0px;width:2.0px;height:2.0px;background:#555;"></div>
<div class="r" style="left:1213.0px;top:901.0px;width:2.0px;height:2.0px;background:#555;"></div>
<div class="r" style="left:553.0px;top:914.9px;width:664.0px;height:30.7px;background:#f4f5f6;"></div>
<svg class="r" style="left:590.0px;top:921.4px;" width="20" height="20" viewBox="0 0 20 20"><path d="M18.6,0.9 C12.2,1.2 7.6,5.3 5.4,11 L8.9,14.6 C14.6,12.4 18.6,7.6 18.6,0.9 Z" fill="none" stroke="#3e7a5c" stroke-width="2.1" stroke-linejoin="round"/><circle cx="13.6" cy="5.9" r="1.3" fill="#3e7a5c"/><path d="M7.2,5.3 L2.6,6.2 L0.6,10.6 L5,10.9 Z M14.8,13 L13.8,17.5 L9.4,19.5 L9.1,15.2 Z" fill="#3e7a5c"/></svg>
<svg class="r" style="left:624.0px;top:920.2px;" width="20" height="20" viewBox="0 0 20 20"><circle cx="9.6" cy="9.9" r="8.3" fill="none" stroke="#3e7a5c" stroke-width="1.7"/><circle cx="9.7" cy="5.9" r="1.1" fill="#3e7a5c"/><path d="M7.7,8.5 H10.3 V13.8 M7.6,13.8 H12" fill="none" stroke="#3e7a5c" stroke-width="1.7"/></svg>
<svg class="r" style="left:654.0px;top:923.4px;" width="14" height="14" viewBox="0 0 14 14"><path d="M1.5,1.5 L12,12 M12,1.5 L1.5,12" stroke="#3e7a5c" stroke-width="1.5"/></svg>
<div class="r" style="left:680.3px;top:922.7px;width:15.5px;height:15.0px;background:transparent;border:2px solid #333;"></div>
<svg class="r" style="left:706.0px;top:919.9px;" width="22" height="20" viewBox="0 0 22 20"><path d="M1.5,11 L4.8,1.8 L8.6,13.7 L12,6.5 L16.3,18 L19.7,12.8" fill="none" stroke="#4e8a3d" stroke-width="2.1" stroke-linejoin="round"/></svg>
<div class="t" style="top:923.3px;font-size:15.60px;line-height:15.60px;color:#444;left:739.6px;">°F</div>
<div class="t" style="top:923.0px;font-size:16.00px;line-height:16.00px;color:#2b2b2b;font-weight:700;left:765.5px;">Temperature</div>
<div class="t" style="top:923.6px;font-size:15.20px;line-height:15.20px;color:#3e7a5c;right:666.0px;text-decoration:underline;">Area B</div>
<div class="r" style="left:553.0px;top:945.6px;width:664.0px;height:30.7px;background:#fdfdfd;"></div>
<svg class="r" style="left:590.0px;top:952.1px;" width="20" height="20" viewBox="0 0 20 20"><path d="M18.6,0.9 C12.2,1.2 7.6,5.3 5.4,11 L8.9,14.6 C14.6,12.4 18.6,7.6 18.6,0.9 Z" fill="none" stroke="#3e7a5c" stroke-width="2.1" stroke-linejoin="round"/><circle cx="13.6" cy="5.9" r="1.3" fill="#3e7a5c"/><path d="M7.2,5.3 L2.6,6.2 L0.6,10.6 L5,10.9 Z M14.8,13 L13.8,17.5 L9.4,19.5 L9.1,15.2 Z" fill="#3e7a5c"/></svg>
<svg class="r" style="left:624.0px;top:950.9px;" width="20" height="20" viewBox="0 0 20 20"><circle cx="9.6" cy="9.9" r="8.3" fill="none" stroke="#3e7a5c" stroke-width="1.7"/><circle cx="9.7" cy="5.9" r="1.1" fill="#3e7a5c"/><path d="M7.7,8.5 H10.3 V13.8 M7.6,13.8 H12" fill="none" stroke="#3e7a5c" stroke-width="1.7"/></svg>
<svg class="r" style="left:654.0px;top:954.1px;" width="14" height="14" viewBox="0 0 14 14"><path d="M1.5,1.5 L12,12 M12,1.5 L1.5,12" stroke="#3e7a5c" stroke-width="1.5"/></svg>
<div class="r" style="left:680.3px;top:953.4px;width:15.5px;height:15.0px;background:transparent;border:2px solid #333;"></div>
<svg class="r" style="left:708.5px;top:949.1px;" width="18" height="21" viewBox="0 0 18 21"><rect x="0.5" y="1" width="7.5" height="18.5" fill="#8d2e9b"/><rect x="9" y="1" width="7.5" height="18.5" fill="#8d2e9b"/><path d="M1,12 L3,5 L5.5,15 L8.5,5 L11,15 L13.5,5 L16,13" fill="none" stroke="#fff" stroke-width="1.2"/></svg>
<div class="t" style="top:953.9px;font-size:15.70px;line-height:15.70px;color:#2b2b2b;font-weight:700;left:765.5px;">Temperature &gt; 90 and Compressor Stage is STAGE 2</div>
<div class="t" style="top:954.3px;font-size:15.20px;line-height:15.20px;color:#3e7a5c;right:666.0px;text-decoration:underline;">Area B</div>
<svg class="r" style="left:556.0px;top:949.6px;" width="22" height="22" viewBox="0 0 22 22"><path d="M3,20 L4.5,14.5 L15.5,3.5 L19.5,7.5 L8.5,18.5 Z" fill="none" stroke="#3e7a5c" stroke-width="1.9" stroke-linejoin="round"/><path d="M13.5,5.5 L17.5,9.5 L19.5,7.5 L15.5,3.5 Z" fill="#3e7a5c"/><path d="M7,15 L14,8" stroke="#3e7a5c" stroke-width="1.2"/></svg>
<div class="r" style="left:553.0px;top:976.3px;width:664.0px;height:30.7px;background:#f4f5f6;"></div>
<svg class="r" style="left:590.0px;top:982.8px;" width="20" height="20" viewBox="0 0 20 20"><path d="M18.6,0.9 C12.2,1.2 7.6,5.3 5.4,11 L8.9,14.6 C14.6,12.4 18.6,7.6 18.6,0.9 Z" fill="none" stroke="#3e7a5c" stroke-width="2.1" stroke-linejoin="round"/><circle cx="13.6" cy="5.9" r="1.3" fill="#3e7a5c"/><path d="M7.2,5.3 L2.6,6.2 L0.6,10.6 L5,10.9 Z M14.8,13 L13.8,17.5 L9.4,19.5 L9.1,15.2 Z" fill="#3e7a5c"/></svg>
<svg class="r" style="left:624.0px;top:981.6px;" width="20" height="20" viewBox="0 0 20 20"><circle cx="9.6" cy="9.9" r="8.3" fill="none" stroke="#3e7a5c" stroke-width="1.7"/><circle cx="9.7" cy="5.9" r="1.1" fill="#3e7a5c"/><path d="M7.7,8.5 H10.3 V13.8 M7.6,13.8 H12" fill="none" stroke="#3e7a5c" stroke-width="1.7"/></svg>
<svg class="r" style="left:654.0px;top:984.8px;" width="14" height="14" viewBox="0 0 14 14"><path d="M1.5,1.5 L12,12 M12,1.5 L1.5,12" stroke="#3e7a5c" stroke-width="1.5"/></svg>
<div class="r" style="left:680.3px;top:984.1px;width:15.5px;height:15.0px;background:transparent;border:2px solid #333;"></div>
<svg class="r" style="left:706.0px;top:981.3px;" width="22" height="20" viewBox="0 0 22 20"><path d="M1.5,11 L4.8,1.8 L8.6,13.7 L12,6.5 L16.3,18 L19.7,12.8" fill="none" stroke="#c25b1e" stroke-width="2.1" stroke-linejoin="round"/></svg>
<div class="t" style="top:984.7px;font-size:15.60px;line-height:15.60px;color:#444;left:739.6px;">%</div>
<div class="t" style="top:984.4px;font-size:16.00px;line-height:16.00px;color:#2b2b2b;font-weight:700;left:765.5px;">Relative Humidity</div>
<div class="t" style="top:985.0px;font-size:15.20px;line-height:15.20px;color:#3e7a5c;right:666.0px;text-decoration:underline;">Area B</div>
<div class="r" style="left:553.0px;top:1075.0px;width:663.0px;height:5.0px;background:#efefef;"></div>
<div class="r" style="left:553.0px;top:1075.0px;width:512.0px;height:5.0px;background:#c4c4c4;border-radius:2.5px;"></div>
<div class="r" style="left:1217.0px;top:797.0px;width:4.0px;height:283.0px;background:#e6e7ea;"></div>
<div class="r" style="left:1221.0px;top:804.0px;width:657.0px;height:276.0px;background:#fdfdfd;"></div>
<div class="r" style="left:1221.0px;top:804.0px;width:657.0px;height:38.5px;background:#f2f3f5;"></div>
<div class="r" style="left:1221.0px;top:842.0px;width:657.0px;height:1.0px;background:#e2e4e8;"></div>
<div class="r" style="left:1226.0px;top:804.0px;width:136.5px;height:38.0px;background:#fdfdfd;"></div>
<div class="r" style="left:1226.0px;top:839.2px;width:136.5px;height:2.8px;background:#3e7a5c;"></div>
<svg class="r" style="left:1239.0px;top:811.0px;" width="16" height="21" viewBox="0 0 16 21"><path d="M4.3,1.8 H1.6 V19.2 H4.3 M10.7,1.8 H13.4 V19.2 H10.7" fill="none" stroke="#3e7a5c" stroke-width="2.1"/><path d="M4.3,6.5 L5.9,15 L7.5,4.8 L9.1,13 L10.6,6.5" fill="none" stroke="#3e7a5c" stroke-width="1.3"/></svg>
<div class="t" style="top:811.2px;font-size:21.00px;line-height:21.00px;color:#2b2b2b;left:1263.5px;">Capsules</div>
<svg class="r" style="left:1852.0px;top:810.0px;" width="24" height="24" viewBox="0 0 24 24"><g fill="none" stroke="#3e7a5c" stroke-width="2.3"><path d="M13.5,10.5 L21,3 M14.5,3 H21 V9.5"/><path d="M10.5,13.5 L3,21 M3,14.5 V21 H9.5"/></g></svg>
<div class="r" style="left:1818.0px;top:846.5px;width:29.5px;height:28.0px;background:#fdfdfc;border:1px solid #e3e5e8;border-radius:4px;"></div>
<svg class="r" style="left:1822.0px;top:850.0px;" width="22" height="22" viewBox="0 0 22 22"><circle cx="9" cy="8.5" r="6.3" fill="none" stroke="#222" stroke-width="1.7"/><path d="M13.5,13 L18.5,18 M9,5 V12 M5.5,8.5 H12.5" stroke="#222" stroke-width="1.7"/></svg>
<div class="r" style="left:1850.5px;top:846.5px;width:30.0px;height:28.0px;background:#fdfdfc;border:1px solid #e3e5e8;border-radius:4px;"></div>
<div class="r" style="left:1858.5px;top:852.0px;width:16.5px;height:16.5px;background:transparent;border:2px solid #222;"></div>
<div class="r" style="left:1862.5px;top:859.3px;width:8.5px;height:1.8px;background:#222;"></div>
<div class="r" style="left:1221.0px;top:875.2px;width:650.0px;height:1.0px;background:#eef0f2;"></div>
<div class="r" style="left:1228.3px;top:889.3px;width:15.5px;height:15.0px;background:transparent;border:2px solid #333;"></div>
<div class="t" style="top:888.3px;font-size:16.00px;line-height:16.00px;color:#3e7a5c;font-weight:700;left:1287.7px;">Start</div>
<svg class="r" style="left:1331.0px;top:886.0px;" width="14" height="9" viewBox="0 0 14 9"><path d="M1.8,7.3 L7,1.8 L12.2,7.3 Z" fill="none" stroke="#3e7a5c" stroke-width="1.5" stroke-linejoin="round"/></svg>
<svg class="r" style="left:1352.5px;top:886.1px;" width="6" height="6" viewBox="0 0 6 6"><circle cx="2.8" cy="2.8" r="2.4" fill="#d9d9d9"/></svg>
<svg class="r" style="left:1352.5px;top:893.0px;" width="6" height="6" viewBox="0 0 6 6"><circle cx="2.8" cy="2.8" r="2.4" fill="#d9d9d9"/></svg>
<svg class="r" style="left:1352.5px;top:900.0px;" width="6" height="6" viewBox="0 0 6 6"><circle cx="2.8" cy="2.8" r="2.4" fill="#d9d9d9"/></svg>
<svg class="r" style="left:1735.0px;top:883.0px;" width="28" height="24" viewBox="0 0 28 24"><rect x="1.5" y="2" width="19" height="15" fill="none" stroke="#444" stroke-width="1"/><path d="M1.5,7 H11 M1.5,12 H11 M11,2 V17" stroke="#444" stroke-width="1"/><path d="M12,5 L15,2 M12,9 L19,2 M12,13 L20,5 M13,16 L20,9 M17,16 L20,13" stroke="#999" stroke-width="0.9"/><circle cx="21" cy="17.5" r="4.4" fill="#333"/><path d="M21,15 V20 M18.5,17.5 H23.5" stroke="#fff" stroke-width="1.4"/></svg>
<div class="r" style="left:1766.0px;top:880.0px;width:1.0px;height:28.0px;background:#dddfe2;"></div>
<svg class="r" style="left:1790.0px;top:883.0px;" width="28" height="24" viewBox="0 0 28 24"><rect x="1.5" y="2" width="19" height="15" fill="none" stroke="#5c9a5c" stroke-width="1"/><path d="M1.5,7 H11 M1.5,12 H11 M11,2 V17" stroke="#5c9a5c" stroke-width="1"/><path d="M12,5 L15,2 M12,9 L19,2 M12,13 L20,5 M13,16 L20,9 M17,16 L20,13" stroke="#999" stroke-width="0.9"/><circle cx="21" cy="17.5" r="4.4" fill="#4a8a3a"/><path d="M21,15 V20 M18.5,17.5 H23.5" stroke="#fff" stroke-width="1.4"/></svg>
<svg class="r" style="left:1836.0px;top:883.0px;" width="28" height="24" viewBox="0 0 28 24"><rect x="1.5" y="2" width="19" height="15" fill="none" stroke="#c8663a" stroke-width="1"/><path d="M1.5,7 H11 M1.5,12 H11 M11,2 V17" stroke="#c8663a" stroke-width="1"/><path d="M12,5 L15,2 M12,9 L19,2 M12,13 L20,5 M13,16 L20,9 M17,16 L20,13" stroke="#999" stroke-width="0.9"/><circle cx="21" cy="17.5" r="4.4" fill="#c0561e"/><path d="M21,15 V20 M18.5,17.5 H23.5" stroke="#fff" stroke-width="1.4"/></svg>
<div class="r" style="left:1221.0px;top:912.4px;width:650.0px;height:30.6px;background:#f4f5f6;"></div>
<div class="r" style="left:1221.0px;top:943.0px;width:650.0px;height:30.6px;background:#fdfdfd;"></div>
<div class="r" style="left:1221.0px;top:973.6px;width:650.0px;height:30.6px;background:#f4f5f6;"></div>
<div class="r" style="left:1221.0px;top:1004.2px;width:650.0px;height:30.6px;background:#fdfdfd;"></div>
<div class="r" style="left:1221.0px;top:1034.8px;width:650.0px;height:19.2px;background:#f4f5f6;"></div>
<div class="r" style="left:1221px;top:912px;width:650px;height:142px;overflow:hidden">
<div class="r" style="left:7.3px;top:9.2px;width:15.5px;height:15px;border:2px solid #333"></div>
<svg class="r" style="left:40.0px;top:5.4px;" width="16" height="21" viewBox="0 0 16 21"><path d="M4.3,1.8 H1.6 V19.2 H4.3 M10.7,1.8 H13.4 V19.2 H10.7" fill="none" stroke="#8d2e9b" stroke-width="2.1"/><path d="M4.3,6.5 L5.9,15 L7.5,4.8 L9.1,13 L10.6,6.5" fill="none" stroke="#8d2e9b" stroke-width="1.3"/></svg>
<div class="t" style="left:66.5px;top:10.0px;font-size:15.5px;line-height:15.5px;color:#333">29 Jun 2024 4:08 PM</div>
<div class="r" style="left:7.3px;top:39.8px;width:15.5px;height:15px;border:2px solid #333"></div>
<svg class="r" style="left:40.0px;top:36.0px;" width="16" height="21" viewBox="0 0 16 21"><path d="M4.3,1.8 H1.6 V19.2 H4.3 M10.7,1.8 H13.4 V19.2 H10.7" fill="none" stroke="#8d2e9b" stroke-width="2.1"/><path d="M4.3,6.5 L5.9,15 L7.5,4.8 L9.1,13 L10.6,6.5" fill="none" stroke="#8d2e9b" stroke-width="1.3"/></svg>
<div class="t" style="left:66.5px;top:40.6px;font-size:15.5px;line-height:15.5px;color:#333">29 Jun 2024 4:36 PM</div>
<div class="r" style="left:7.3px;top:70.4px;width:15.5px;height:15px;border:2px solid #333"></div>
<svg class="r" style="left:40.0px;top:66.6px;" width="16" height="21" viewBox="0 0 16 21"><path d="M4.3,1.8 H1.6 V19.2 H4.3 M10.7,1.8 H13.4 V19.2 H10.7" fill="none" stroke="#8d2e9b" stroke-width="2.1"/><path d="M4.3,6.5 L5.9,15 L7.5,4.8 L9.1,13 L10.6,6.5" fill="none" stroke="#8d2e9b" stroke-width="1.3"/></svg>
<div class="t" style="left:66.5px;top:71.2px;font-size:15.5px;line-height:15.5px;color:#333">29 Jun 2024 5:02 PM</div>
<div class="r" style="left:7.3px;top:101.0px;width:15.5px;height:15px;border:2px solid #333"></div>
<svg class="r" style="left:40.0px;top:97.2px;" width="16" height="21" viewBox="0 0 16 21"><path d="M4.3,1.8 H1.6 V19.2 H4.3 M10.7,1.8 H13.4 V19.2 H10.7" fill="none" stroke="#8d2e9b" stroke-width="2.1"/><path d="M4.3,6.5 L5.9,15 L7.5,4.8 L9.1,13 L10.6,6.5" fill="none" stroke="#8d2e9b" stroke-width="1.3"/></svg>
<div class="t" style="left:66.5px;top:101.8px;font-size:15.5px;line-height:15.5px;color:#333">29 Jun 2024 5:28 PM</div>
<div class="r" style="left:7.3px;top:131.6px;width:15.5px;height:15px;border:2px solid #333"></div>
<svg class="r" style="left:40.0px;top:127.8px;" width="16" height="21" viewBox="0 0 16 21"><path d="M4.3,1.8 H1.6 V19.2 H4.3 M10.7,1.8 H13.4 V19.2 H10.7" fill="none" stroke="#8d2e9b" stroke-width="2.1"/><path d="M4.3,6.5 L5.9,15 L7.5,4.8 L9.1,13 L10.6,6.5" fill="none" stroke="#8d2e9b" stroke-width="1.3"/></svg>
<div class="t" style="left:66.5px;top:132.4px;font-size:15.5px;line-height:15.5px;color:#333">29 Jun 2024 5:52 PM</div>
</div>
<div class="r" style="left:1871.0px;top:876.0px;width:7.0px;height:178.0px;background:#f1f1f1;"></div>
<div class="r" style="left:1871.5px;top:876.0px;width:6.0px;height:47.0px;background:#c9c9c9;border-radius:3px;"></div>
<div class="r" style="left:1221.0px;top:1054.0px;width:657.0px;height:26.0px;background:#fdfdfd;"></div>
<div class="r" style="left:1221.0px;top:1054.0px;width:657.0px;height:1.0px;background:#e9ebee;"></div>
<div class="t" style="top:1065.8px;font-size:15.00px;line-height:15.00px;color:#333;left:1228.0px;">Page:</div>
<div class="r" style="left:1275.0px;top:1058.5px;width:66.5px;height:24.0px;background:#fdfdfc;border:1px solid #dcdfe3;border-radius:3px;"></div>
<div class="t" style="top:1065.0px;font-size:16.00px;line-height:16.00px;color:#333;left:1287.0px;">1</div>
<svg class="r" style="left:1311.0px;top:1064.0px;" width="22" height="14" viewBox="0 0 22 14"><path d="M3,3 L11,10.5 L19,3" fill="none" stroke="#c8cbd0" stroke-width="1.8"/></svg>
<div class="r" style="left:1798.0px;top:1058.5px;width:78.0px;height:24.0px;background:#fdfdfc;border:1px solid #e3e5e8;border-radius:3px;"></div>
<div class="r" style="left:1825.0px;top:1058.5px;width:26.5px;height:24.0px;background:#467d60;"></div>
<div class="t" style="top:1065.0px;font-size:16.00px;line-height:16.00px;color:#fff;left:1838.3px;transform:translateX(-50%);">1</div>
<svg class="r" style="left:1804.0px;top:1063.0px;" width="14" height="14" viewBox="0 0 14 14"><path d="M10,2.5 L4,7 L10,11.5 Z" fill="none" stroke="#c3c6cc" stroke-width="1.3"/></svg>
<svg class="r" style="left:1857.0px;top:1063.0px;" width="14" height="14" viewBox="0 0 14 14"><path d="M4,2.5 L10,7 L4,11.5 Z" fill="none" stroke="#c3c6cc" stroke-width="1.3"/></svg>
<div class="r" style="left:536.0px;top:146.0px;width:32.0px;height:32.0px;background:#fdfdfc;border:1px solid #e4e5e8;border-radius:50%;"></div>
<svg class="r" style="left:545.0px;top:153.0px;" width="14" height="18" viewBox="0 0 14 18"><path d="M9.5,2.5 L3.5,9 L9.5,15.5" fill="none" stroke="#3e7a5c" stroke-width="1.7"/></svg>
</body></html>
